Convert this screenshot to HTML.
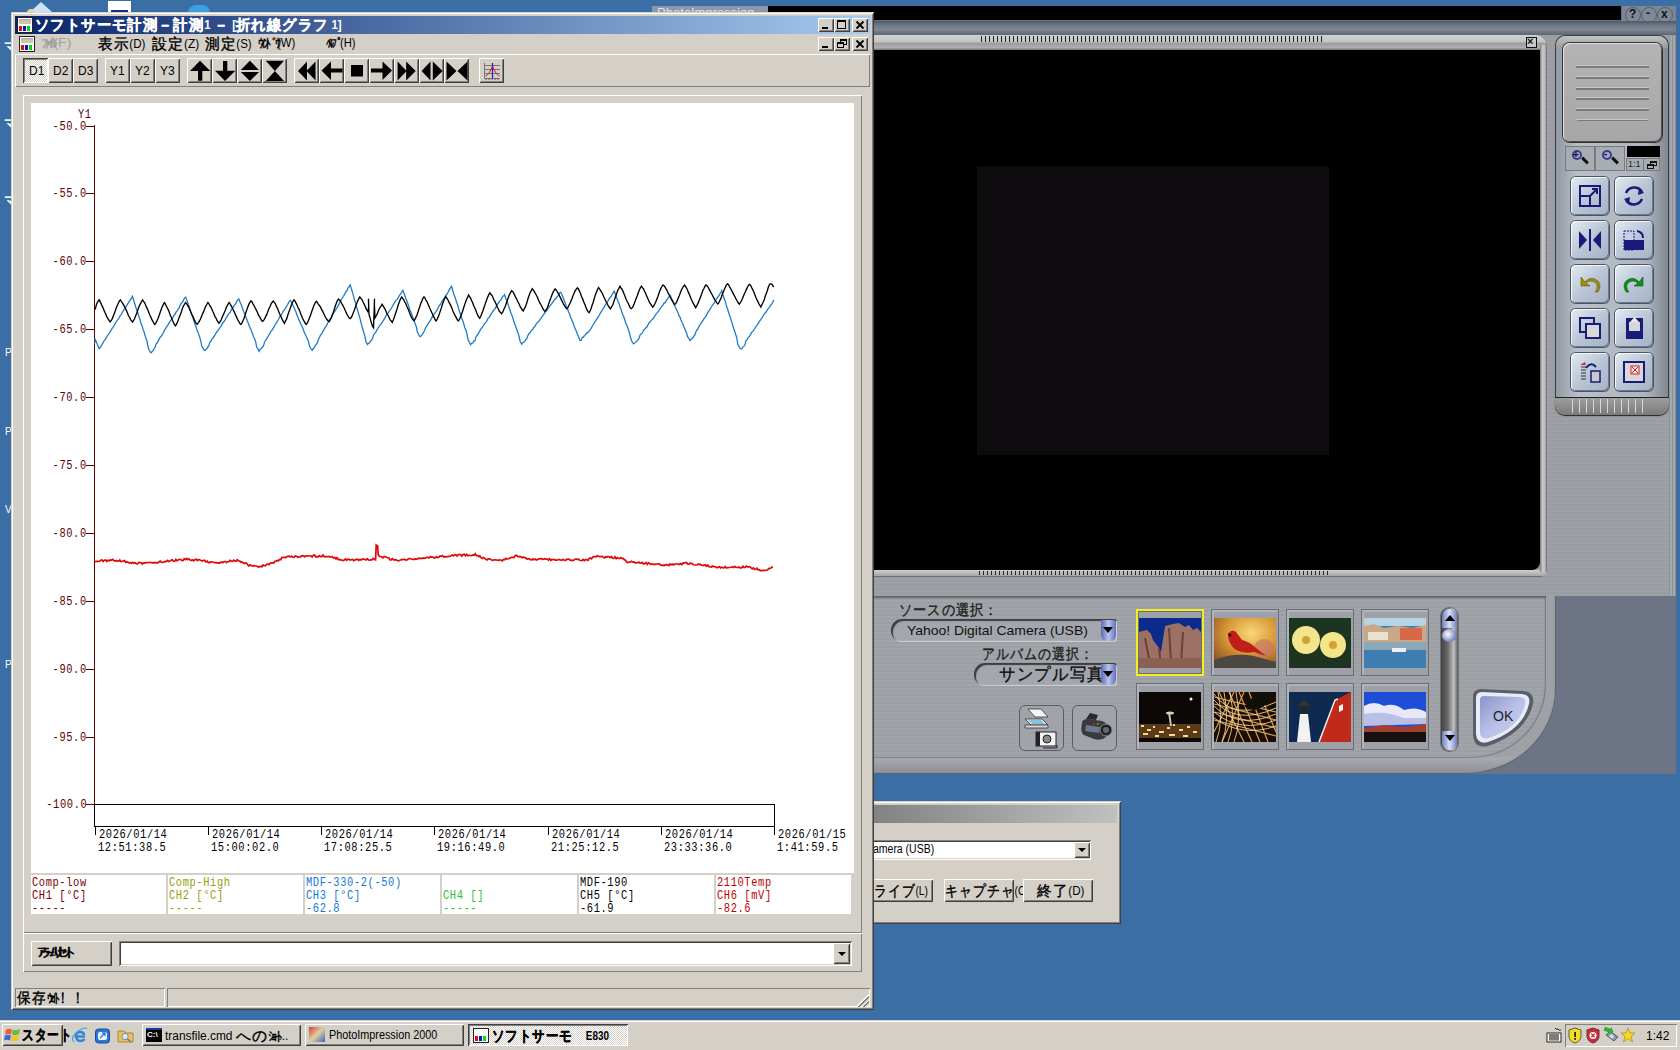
<!DOCTYPE html>
<html><head><meta charset="utf-8"><title>screen</title>
<style>
*{box-sizing:border-box;margin:0;padding:0}
html,body{width:1680px;height:1050px;overflow:hidden}
body{position:relative;background:#3A6EA5;font-family:"Liberation Sans",sans-serif;font-size:12px;color:#000}
.a{position:absolute}
.face{background:#D4D0C8}
.win{background:#D4D0C8;box-shadow:inset 1px 1px #D4D0C8,inset -1px -1px #404040,inset 2px 2px #fff,inset -2px -2px #808080}
.btn{background:#D4D0C8;box-shadow:inset 1px 1px #fff,inset -1px -1px #404040,inset 2px 2px #D4D0C8,inset -2px -2px #808080}
.sunk{box-shadow:inset 1px 1px #808080,inset -1px -1px #fff,inset 2px 2px #404040,inset -2px -2px #D4D0C8}
.thin-up{box-shadow:inset 1px 1px #fff,inset -1px -1px #808080}
.thin-dn{box-shadow:inset 1px 1px #808080,inset -1px -1px #fff}
.mono{font-family:"Liberation Mono",monospace}
.t{white-space:nowrap;line-height:1}
.fw{font-size:1.21em;letter-spacing:0.083em;-webkit-text-stroke:0.4px;vertical-align:-0.08em;line-height:1}
.hw{font-size:1.1em;letter-spacing:-0.33em;-webkit-text-stroke:0.3px;vertical-align:-0.05em;line-height:1}
</style></head><body>
<!-- desktop icon bits -->
<div class="a" style="left:30px;top:2px;width:0;height:0;border-left:11px solid transparent;border-right:11px solid transparent;border-bottom:10px solid #CFE3F7"></div>
<div class="a" style="left:27px;top:9px;width:8px;height:4px;background:#E8D9A0;border-radius:4px 4px 0 0"></div>
<div class="a" style="left:108px;top:1px;width:23px;height:11px;background:#fff"></div>
<div class="a" style="left:111px;top:10px;width:17px;height:2px;background:#1A2A8A"></div>
<div class="a" style="left:188px;top:5px;width:22px;height:8px;background:#3AA0E0;border-radius:11px 11px 0 0"></div>
<div class="a t" style="left:4px;top:40px;color:#fff;font-size:10px"><span class="fw">マ</span></div>
<div class="a t" style="left:4px;top:117px;color:#fff;font-size:10px"><span class="fw">マ</span></div>
<div class="a t" style="left:4px;top:194px;color:#fff;font-size:10px"><span class="fw">マ</span></div>
<div class="a t" style="left:5px;top:348px;color:#fff;font-size:10px">P</div>
<div class="a t" style="left:5px;top:427px;color:#fff;font-size:10px">P</div>
<div class="a t" style="left:5px;top:505px;color:#fff;font-size:10px">V</div>
<div class="a t" style="left:5px;top:660px;color:#fff;font-size:10px">P</div>

<!-- PhotoImpression tab label behind -->
<div class="a" style="left:652px;top:6px;width:116px;height:8px;background:#8C97A8"></div>
<div class="a t" style="left:657px;top:6px;color:#DDE3EC;font-size:13px">PhotoImpression</div>

<!-- PhotoImpression body -->
<div class="a" style="left:768px;top:6px;width:908px;height:590px;background:repeating-linear-gradient(#9DA1A6 0 2px,#999DA2 2px 4px)"></div>
<div class="a" style="left:768px;top:6px;width:854px;height:15px;background:#000;box-shadow:inset -1px -1px #6A7280"></div>
<div class="a" style="left:1622px;top:6px;width:54px;height:15px;background:#7C8592"></div>
<div class="a" style="left:1625px;top:7px;width:16px;height:16px;border-radius:50%;border:1px solid #5A6270;background:#7F8896"></div>
<div class="a" style="left:1641px;top:7px;width:16px;height:16px;border-radius:50%;border:1px solid #5A6270;background:#7F8896"></div>
<div class="a" style="left:1657px;top:7px;width:16px;height:16px;border-radius:50%;border:1px solid #5A6270;background:#7F8896"></div>
<div class="a t" style="left:1629px;top:8px;font-size:12px;font-weight:bold;color:#111">?</div>
<div class="a t" style="left:1646px;top:7px;font-size:12px;font-weight:bold;color:#111">-</div>
<div class="a t" style="left:1661px;top:8px;font-size:12px;font-weight:bold;color:#111">x</div>
<div class="a" style="left:768px;top:21px;width:908px;height:14px;background:linear-gradient(#4F5866,#6E7784 30%,#7D8692 60%,#5E6673)"></div>
<div class="a" style="left:1669px;top:35px;width:7px;height:561px;background:repeating-linear-gradient(90deg,#8E9399 0 1px,#A4A8AD 1px 3px)"></div>

<!-- viewer frame -->
<div class="a" style="left:768px;top:35px;width:779px;height:542px;border-radius:0 12px 12px 0;background:linear-gradient(90deg,#B5B5B5,#C9C9C9 95%,#8A8A8A);box-shadow:inset -1px -1px #505050"></div>
<div class="a" style="left:768px;top:35px;width:779px;height:15px;border-radius:0 12px 0 0;background:linear-gradient(#D2D2D2,#C4C4C4 45%,#9C9C9C 55%,#B0B0B0 85%,#707070)"></div>
<div class="a" style="left:768px;top:570px;width:779px;height:7px;border-radius:0 0 12px 0;background:linear-gradient(#CFCFCF,#A8A8A8 80%,#505050)"></div>
<div class="a" style="left:1540px;top:45px;width:7px;height:527px;background:linear-gradient(90deg,#7A7A7A,#C8C8C8 35%,#BDBDBD 70%,#6A6A6A)"></div>
<div class="a" style="left:768px;top:50px;width:772px;height:520px;background:#000;border-radius:0 0 8px 0"></div>
<div class="a" style="left:981px;top:36px;width:344px;height:6px;background:repeating-linear-gradient(90deg,#222 0 1px,transparent 1px 4px)"></div>
<div class="a" style="left:979px;top:571px;width:350px;height:4px;background:repeating-linear-gradient(90deg,#222 0 1px,transparent 1px 4px)"></div>
<div class="a" style="left:1526px;top:37px;width:11px;height:11px;border:1px solid #111;background:#C8C8C8"></div>
<div class="a t" style="left:1527px;top:36px;font-size:11px;font-weight:bold;color:#111">×</div>
<div class="a" style="left:977px;top:166px;width:352px;height:289px;background:#0E0B0E"></div>

<!-- lower panel -->
<div class="a" style="left:873px;top:596px;width:803px;height:178px;background:#6D7486"></div>
<div class="a" style="left:768px;top:596px;width:788px;height:178px;border-radius:0 0 90px 0 / 0 0 84px 0;background:linear-gradient(#9EA1A6 0,#9EA1A6 160px,#A6A9AE 162px,#8C9097 178px);box-shadow:inset -1px -1px 1px #5A5F68"></div>
<div class="a" style="left:768px;top:596px;width:778px;height:162px;border-radius:0 0 74px 0 / 0 0 74px 0;background:repeating-linear-gradient(#A1A4A9 0 2px,#9C9FA4 2px 4px);box-shadow:inset 0 2px 2px #5E6268,inset -1px -1px 1px #80848A"></div>
<!-- right tool panel -->
<div class="a" style="left:1555px;top:35px;width:114px;height:380px;border-radius:10px 10px 12px 12px;background:linear-gradient(90deg,#8E96A0,#B9C0C9 20%,#AEB5BF 80%,#7E858F);box-shadow:inset 0 0 0 1px #3A3E44"></div>
<div class="a" style="left:1556px;top:36px;width:112px;height:12px;border-radius:10px 10px 0 0;background:linear-gradient(#C4C4C4,#9A9A9A)"></div>
<div class="a" style="left:1563px;top:43px;width:99px;height:99px;border-radius:7px;background:linear-gradient(#B4B4B4,#A6A6A6);box-shadow:inset 1px 1px #E0E0E0,inset -1px -1px #505050,0 0 0 1px #303030"></div>
<div class="a" style="left:1576px;top:64px;width:73px;height:57px;background:repeating-linear-gradient(transparent 0 1px,#C8C8C8 1px 2px,#7A7A7A 2px 4px,transparent 4px 10.8px);border-radius:3px"></div>
<div class="a" style="left:1565px;top:146px;width:30px;height:25px;box-shadow:inset 1px 1px #7A7A7A,inset -1px -1px #7A7A7A;background:#A8ADB4"></div>
<div class="a" style="left:1595px;top:146px;width:30px;height:25px;box-shadow:inset 1px 1px #7A7A7A,inset -1px -1px #7A7A7A;background:#A8ADB4"></div>
<div class="a" style="left:1572px;top:150px;width:10px;height:10px;border-radius:50%;border:2px solid #3A3A9A"></div>
<div class="a" style="left:1581px;top:159px;width:8px;height:3px;background:#111;transform:rotate(45deg)"></div>
<div class="a" style="left:1602px;top:150px;width:10px;height:10px;border-radius:50%;border:2px solid #3A3A9A"></div>
<div class="a" style="left:1611px;top:159px;width:8px;height:3px;background:#111;transform:rotate(45deg)"></div>
<div class="a" style="left:1627px;top:146px;width:33px;height:11px;background:#000"></div>
<div class="a" style="left:1626px;top:158px;width:34px;height:13px;box-shadow:inset 0 0 0 1px #7A7A7A;background:#A8ADB4"></div>
<div class="a" style="left:1643px;top:158px;width:1px;height:13px;background:#7A7A7A"></div>
<div class="a t" style="left:1628px;top:160px;font-size:9px;color:#222">1:1</div>
<div class="a" style="left:1650px;top:161px;width:7px;height:5px;border:1px solid #111;border-top-width:2px"></div>
<div class="a" style="left:1647px;top:164px;width:7px;height:5px;border:1px solid #111;border-top-width:2px;background:#A8ADB4"></div>
<div class="a t" style="left:1573px;top:150px;font-size:10px;font-weight:bold;color:#111">+</div>
<div class="a t" style="left:1604px;top:149px;font-size:10px;font-weight:bold;color:#111">-</div>
<div class="a" style="left:1571px;top:177px;width:38px;height:38px;border-radius:5px;background:linear-gradient(135deg,#E4EAF2,#BAC6D6 50%,#A4B2C4);box-shadow:inset 1px 1px #F4F8FC,inset -1px -1px #6A7A90,0 0 0 1px #4A5464"></div>
<div class="a" style="left:1615px;top:177px;width:38px;height:38px;border-radius:5px;background:linear-gradient(135deg,#E4EAF2,#BAC6D6 50%,#A4B2C4);box-shadow:inset 1px 1px #F4F8FC,inset -1px -1px #6A7A90,0 0 0 1px #4A5464"></div>
<div class="a" style="left:1571px;top:221px;width:38px;height:38px;border-radius:5px;background:linear-gradient(135deg,#E4EAF2,#BAC6D6 50%,#A4B2C4);box-shadow:inset 1px 1px #F4F8FC,inset -1px -1px #6A7A90,0 0 0 1px #4A5464"></div>
<div class="a" style="left:1615px;top:221px;width:38px;height:38px;border-radius:5px;background:linear-gradient(135deg,#E4EAF2,#BAC6D6 50%,#A4B2C4);box-shadow:inset 1px 1px #F4F8FC,inset -1px -1px #6A7A90,0 0 0 1px #4A5464"></div>
<div class="a" style="left:1571px;top:265px;width:38px;height:38px;border-radius:5px;background:linear-gradient(135deg,#E4EAF2,#BAC6D6 50%,#A4B2C4);box-shadow:inset 1px 1px #F4F8FC,inset -1px -1px #6A7A90,0 0 0 1px #4A5464"></div>
<div class="a" style="left:1615px;top:265px;width:38px;height:38px;border-radius:5px;background:linear-gradient(135deg,#E4EAF2,#BAC6D6 50%,#A4B2C4);box-shadow:inset 1px 1px #F4F8FC,inset -1px -1px #6A7A90,0 0 0 1px #4A5464"></div>
<div class="a" style="left:1571px;top:309px;width:38px;height:38px;border-radius:5px;background:linear-gradient(135deg,#E4EAF2,#BAC6D6 50%,#A4B2C4);box-shadow:inset 1px 1px #F4F8FC,inset -1px -1px #6A7A90,0 0 0 1px #4A5464"></div>
<div class="a" style="left:1615px;top:309px;width:38px;height:38px;border-radius:5px;background:linear-gradient(135deg,#E4EAF2,#BAC6D6 50%,#A4B2C4);box-shadow:inset 1px 1px #F4F8FC,inset -1px -1px #6A7A90,0 0 0 1px #4A5464"></div>
<div class="a" style="left:1571px;top:353px;width:38px;height:38px;border-radius:5px;background:linear-gradient(135deg,#E4EAF2,#BAC6D6 50%,#A4B2C4);box-shadow:inset 1px 1px #F4F8FC,inset -1px -1px #6A7A90,0 0 0 1px #4A5464"></div>
<div class="a" style="left:1615px;top:353px;width:38px;height:38px;border-radius:5px;background:linear-gradient(135deg,#E4EAF2,#BAC6D6 50%,#A4B2C4);box-shadow:inset 1px 1px #F4F8FC,inset -1px -1px #6A7A90,0 0 0 1px #4A5464"></div>
<svg class="a" style="left:1571px;top:177px" width="38" height="38" viewBox="0 0 38 38"><rect x="9" y="9" width="20" height="20" fill="none" stroke="#1A1A7A" stroke-width="2"/><rect x="9" y="19" width="10" height="10" fill="none" stroke="#1A1A7A" stroke-width="2"/><path d="M18 20 L26 12 M21 12 H26 V17" stroke="#1A1A7A" stroke-width="2" fill="none"/></svg>
<svg class="a" style="left:1615px;top:177px" width="38" height="38" viewBox="0 0 38 38"><path d="M11 16 A9 9 0 0 1 27 15 M27 22 A9 9 0 0 1 11 23" stroke="#1A1A7A" stroke-width="2.5" fill="none"/><path d="M24 11 L29 16 L23 18 Z M14 27 L9 22 L15 20 Z" fill="#1A1A7A"/></svg>
<svg class="a" style="left:1571px;top:221px" width="38" height="38" viewBox="0 0 38 38"><path d="M8 10 L16 19 L8 28 Z M30 10 L22 19 L30 28 Z" fill="#1A1A7A"/><rect x="18" y="8" width="2" height="22" fill="#1A1A7A"/></svg>
<svg class="a" style="left:1615px;top:221px" width="38" height="38" viewBox="0 0 38 38"><rect x="9" y="10" width="10" height="19" fill="#C8CCE8" stroke="#1A1A7A" stroke-dasharray="2 1"/><rect x="9" y="19" width="20" height="10" fill="#1A1A7A"/><path d="M22 10 Q28 11 28 17" stroke="#1A1A7A" stroke-width="2" fill="none"/></svg>
<svg class="a" style="left:1571px;top:265px" width="38" height="38" viewBox="0 0 38 38"><path d="M14 17 L10 12 L10 21 L19 21 L15 18 Q20 14 25 18 Q28 22 24 27 L27 27 Q31 20 27 16 Q20 10 14 17 Z" fill="#9C8C14" stroke="#6A5A08" stroke-width="0.6"/></svg>
<svg class="a" style="left:1615px;top:265px" width="38" height="38" viewBox="0 0 38 38"><path d="M24 17 L28 12 L28 21 L19 21 L23 18 Q18 14 13 18 Q10 22 14 27 L11 27 Q7 20 11 16 Q18 10 24 17 Z" fill="#10901A" stroke="#086010" stroke-width="0.6"/></svg>
<svg class="a" style="left:1571px;top:309px" width="38" height="38" viewBox="0 0 38 38"><rect x="9" y="9" width="14" height="14" fill="none" stroke="#1A1A7A" stroke-width="2"/><rect x="15" y="15" width="14" height="14" fill="#D8D8D8" stroke="#1A1A7A" stroke-width="2"/></svg>
<svg class="a" style="left:1615px;top:309px" width="38" height="38" viewBox="0 0 38 38"><rect x="11" y="9" width="17" height="21" fill="#1A1A7A"/><rect x="14" y="13" width="11" height="9" fill="#D8D8D8"/><path d="M15 13 L19.5 8 L24 13 Z" fill="#E8E8E8"/></svg>
<svg class="a" style="left:1571px;top:353px" width="38" height="38" viewBox="0 0 38 38"><path d="M10 14 H15 M10 17 H15 M10 20 H15 M10 23 H15 M10 26 H15" stroke="#333"/><path d="M9 12 L14 9 L15 12" fill="#D03030"/><path d="M15 15 Q20 8 25 14" stroke="#1A1A7A" stroke-width="2" fill="none"/><rect x="20" y="18" width="9" height="11" fill="#C8C8C8" stroke="#1A1A7A" stroke-width="1.5"/></svg>
<svg class="a" style="left:1615px;top:353px" width="38" height="38" viewBox="0 0 38 38"><rect x="9" y="9" width="20" height="20" fill="#D8D8D8" stroke="#1A1A7A" stroke-width="2"/><rect x="16" y="13" width="8" height="8" fill="#F8E8E8" stroke="#D02020"/><path d="M17 14 L23 20 M23 14 L17 20" stroke="#D02020"/></svg>
<div class="a" style="left:1555px;top:397px;width:114px;height:18px;border-radius:0 0 10px 10px;background:linear-gradient(#A0A0A0,#7A7A7A);box-shadow:inset 0 1px #222,0 1px 1px #222"></div>
<div class="a" style="left:1572px;top:399px;width:72px;height:14px;background:repeating-linear-gradient(90deg,#D8D8D8 0 1px,transparent 1px 7px)"></div>

<!-- left controls -->
<div class="a t" style="transform:scaleX(0.878);transform-origin:0 0;left:899px;top:603px;font-size:12px;color:#222"><span class="fw">ソースの選択：</span></div>
<div class="a" style="left:891px;top:619px;width:226px;height:23px;border-radius:11px 3px 3px 11px;background:#A3A7AD;box-shadow:inset 2px 2px 1px #3A3E44,inset -1px -1px 1px #D0D4D8"></div>
<div class="a t" style="transform:scaleX(1.071);transform-origin:0 0;left:907px;top:624px;font-size:13px;color:#111">Yahoo! Digital Camera (USB)</div>
<div class="a" style="left:1101px;top:620px;width:15px;height:21px;border-radius:0 3px 6px 6px;background:linear-gradient(90deg,#5A6AB0,#B8C4F0 50%,#6070B8)"></div>
<div class="a" style="left:1103px;top:627px;width:0;height:0;border-left:5px solid transparent;border-right:5px solid transparent;border-top:6px solid #000"></div>
<div class="a t" style="transform:scaleX(0.860);transform-origin:0 0;left:982px;top:647px;font-size:12px;color:#222"><span class="fw">アルバムの選択：</span></div>
<div class="a" style="left:974px;top:663px;width:143px;height:23px;border-radius:11px 3px 3px 11px;background:#A3A7AD;box-shadow:inset 2px 2px 1px #3A3E44,inset -1px -1px 1px #D0D4D8"></div>
<div class="a t" style="transform:scaleX(0.960);transform-origin:0 0;left:999px;top:667px;font-size:14px;color:#111"><span class="fw">サンプル写真</span></div>
<div class="a" style="left:1101px;top:664px;width:15px;height:21px;border-radius:0 3px 6px 6px;background:linear-gradient(90deg,#5A6AB0,#B8C4F0 50%,#6070B8)"></div>
<div class="a" style="left:1103px;top:671px;width:0;height:0;border-left:5px solid transparent;border-right:5px solid transparent;border-top:6px solid #000"></div>
<div class="a" style="left:1019px;top:705px;width:45px;height:46px;border-radius:6px;border:1px solid #5A5E64;background:#A0A4AA"></div>
<svg class="a" style="left:1019px;top:705px" width="45" height="46" viewBox="0 0 45 46"><path d="M6 14 L23 14 L29 20 L12 20 Z" fill="#E8E8E8" stroke="#333" stroke-width="0.8"/><path d="M9 15 L22 15 L26 19 L13 19 Z" fill="#8AC0E0"/><path d="M6 20 L29 20 L29 23 L6 23 Z" fill="#D8D8D8" stroke="#333" stroke-width="0.8"/><path d="M9 4 L22 4 L29 12 L16 12 Z" fill="#F4F4F4" stroke="#333" stroke-width="0.8"/><rect x="17" y="27" width="20" height="14" fill="#F4F4F4" stroke="#222"/><rect x="17" y="27" width="4" height="14" fill="#222"/><circle cx="28" cy="34" r="4" fill="#888" stroke="#222"/><path d="M24 43 H38 V40" stroke="#222" fill="none"/></svg>
<div class="a" style="left:1072px;top:705px;width:45px;height:46px;border-radius:6px;border:1px solid #5A5E64;background:#A0A4AA"></div>
<svg class="a" style="left:1072px;top:705px" width="45" height="46" viewBox="0 0 45 46"><path d="M10 18 Q10 14 16 14 L30 16 Q36 18 36 24 L34 32 Q30 36 22 34 L12 30 Q8 28 10 18 Z" fill="#3A3A3A"/><path d="M14 20 L28 22 L27 28 L13 26 Z" fill="#6A7A90"/><circle cx="34" cy="25" r="6" fill="#222" stroke="#888"/><circle cx="34" cy="25" r="3" fill="#5A6A80"/><path d="M14 14 L18 8 L26 10 L24 15 Z" fill="#2A2A2A"/><circle cx="22" cy="19" r="1" fill="#E02020"/><circle cx="26" cy="19" r="1" fill="#20C020"/></svg>
<!-- thumbnails -->
<div class="a" style="left:1136px;top:609px;width:68px;height:67px;background:#9EA2A8;box-shadow:inset 0 0 0 2px #F4F020,inset 0 0 0 3px #6A6E74"></div>
<svg class="a" style="left:1139px;top:618px" width="62" height="50" viewBox="0 0 62 50"><rect width="62" height="50" fill="#0A2A8C"/><path d="M0 14 L8 12 L12 16 L14 22 L17 26 L20 30 L22 34 L26 8 L34 6 L40 5 L46 9 L50 7 L54 12 L58 10 L62 14 L62 50 L0 50 Z" fill="#9C7064"/><path d="M6 20 L10 40 M30 10 L32 44 M44 14 L42 46 M20 30 L22 48" stroke="#6A4038" stroke-width="2"/><rect y="40" width="62" height="10" fill="#8A6050"/></svg>
<div class="a" style="left:1211px;top:609px;width:68px;height:67px;background:#9EA2A8;box-shadow:inset 0 0 0 1px #6A6E74,inset 1px 1px 0 2px #B0B4BA"></div>
<svg class="a" style="left:1214px;top:618px" width="62" height="50" viewBox="0 0 62 50"><defs><radialGradient id="cg" cx="0.6" cy="0.3" r="0.8"><stop offset="0" stop-color="#F8D878"/><stop offset="0.5" stop-color="#D89838"/><stop offset="1" stop-color="#8A5020"/></radialGradient></defs><rect width="62" height="50" fill="url(#cg)"/><ellipse cx="50" cy="30" rx="10" ry="9" fill="#C87868" opacity="0.7"/><path d="M0 42 Q20 34 40 38 L62 44 L62 50 L0 50 Z" fill="#4A4840"/><path d="M14 16 Q18 10 22 14 L28 22 Q36 24 42 30 L52 38 L40 34 Q30 36 22 32 Q14 26 14 16 Z" fill="#C01E18"/><path d="M14 15 L18 17 L15 19 Z" fill="#111"/></svg>
<div class="a" style="left:1286px;top:609px;width:68px;height:67px;background:#9EA2A8;box-shadow:inset 0 0 0 1px #6A6E74,inset 1px 1px 0 2px #B0B4BA"></div>
<svg class="a" style="left:1289px;top:618px" width="62" height="50" viewBox="0 0 62 50"><rect width="62" height="50" fill="#1C3420"/><circle cx="17" cy="22" r="14" fill="#F2E58A"/><circle cx="44" cy="27" r="13" fill="#F2E58A"/><circle cx="17" cy="22" r="4" fill="#D8A030"/><circle cx="44" cy="27" r="4" fill="#D8A030"/></svg>
<div class="a" style="left:1361px;top:609px;width:68px;height:67px;background:#9EA2A8;box-shadow:inset 0 0 0 1px #6A6E74,inset 1px 1px 0 2px #B0B4BA"></div>
<svg class="a" style="left:1364px;top:618px" width="62" height="50" viewBox="0 0 62 50"><rect width="62" height="50" fill="#3E7EB2"/><rect width="62" height="8" fill="#B8D4E4"/><path d="M0 8 L10 6 L20 10 L34 8 L48 10 L62 7 L62 24 L0 24 Z" fill="#C8A888"/><rect x="36" y="10" width="22" height="12" fill="#D86848"/><rect x="4" y="14" width="20" height="8" fill="#E8E0D0"/><rect y="24" width="62" height="8" fill="#8AA8B8"/><rect x="28" y="30" width="14" height="4" fill="#F0F0F0"/></svg>
<div class="a" style="left:1136px;top:683px;width:68px;height:67px;background:#9EA2A8;box-shadow:inset 0 0 0 1px #6A6E74,inset 1px 1px 0 2px #B0B4BA"></div>
<svg class="a" style="left:1139px;top:692px" width="62" height="50" viewBox="0 0 62 50"><rect width="62" height="50" fill="#0C0806"/><circle cx="52" cy="7" r="1.5" fill="#fff"/><rect x="0" y="32" width="62" height="14" fill="#5A3A18"/><path d="M2 34 h3 M8 38 h4 M14 35 h2 M20 40 h5 M28 36 h3 M34 33 h2 M40 38 h4 M48 35 h3 M54 40 h4 M4 42 h5 M16 44 h4 M30 43 h6 M44 44 h5" stroke="#F8D890" stroke-width="2"/><path d="M30 20 L32 34" stroke="#C8C0A8" stroke-width="2"/><ellipse cx="31" cy="21" rx="4" ry="1.5" fill="#D8D0B8"/></svg>
<div class="a" style="left:1211px;top:683px;width:68px;height:67px;background:#9EA2A8;box-shadow:inset 0 0 0 1px #6A6E74,inset 1px 1px 0 2px #B0B4BA"></div>
<svg class="a" style="left:1214px;top:692px" width="62" height="50" viewBox="0 0 62 50"><rect width="62" height="50" fill="#1A0E04"/><path d="M0 5 L62 20 M0 12 L62 28 M0 20 L62 36 M0 28 L62 44 M5 0 L30 50 M15 0 L38 50 M25 0 L46 50 M35 0 L54 50 M45 0 L62 40 M0 40 L20 0 M8 50 L30 0" stroke="#F0B060" stroke-width="1.2" opacity="0.9"/><path d="M0 2 Q20 30 62 10 M0 8 Q22 34 62 16 M0 14 Q24 38 62 22 M0 20 Q26 42 62 28 M0 26 Q28 46 62 34 M4 0 Q10 30 2 50 M10 0 Q16 30 8 50 M16 0 Q22 30 14 50 M22 0 Q28 30 20 50" stroke="#F8D8A0" stroke-width="1" fill="none" opacity="0.85"/><path d="M30 14 L44 0 L62 0 L50 14 Q40 22 30 14 Z" fill="#101008"/></svg>
<div class="a" style="left:1286px;top:683px;width:68px;height:67px;background:#9EA2A8;box-shadow:inset 0 0 0 1px #6A6E74,inset 1px 1px 0 2px #B0B4BA"></div>
<svg class="a" style="left:1289px;top:692px" width="62" height="50" viewBox="0 0 62 50"><rect width="62" height="50" fill="#0E2A50"/><path d="M30 50 L46 8 L62 0 L62 50 Z" fill="#C02A1A"/><path d="M30 50 L46 8 L49 7" stroke="#F0F0F0" stroke-width="1.5" fill="none"/><path d="M8 50 L11 22 L19 22 L22 50 Z" fill="#F2F2F2"/><rect x="9" y="14" width="12" height="8" fill="#1A2A3A"/><path d="M8 14 L15 8 L22 14 Z" fill="#333"/><path d="M50 14 L54 12 L54 18 L50 20 Z" fill="#fff"/></svg>
<div class="a" style="left:1361px;top:683px;width:68px;height:67px;background:#9EA2A8;box-shadow:inset 0 0 0 1px #6A6E74,inset 1px 1px 0 2px #B0B4BA"></div>
<svg class="a" style="left:1364px;top:692px" width="62" height="50" viewBox="0 0 62 50"><rect width="62" height="50" fill="#1E4ED8"/><path d="M0 14 Q10 8 20 14 Q30 10 40 18 Q52 14 62 20 L62 30 L0 32 Z" fill="#E8E8F8"/><path d="M0 22 Q20 18 40 26 L62 26 L62 32 L0 34 Z" fill="#B8C0E8"/><path d="M0 36 L20 33 L40 35 L62 32 L62 40 L0 40 Z" fill="#A04030"/><rect y="40" width="62" height="10" fill="#1A1010"/></svg>
<!-- scrollbar -->
<div class="a" style="left:1441px;top:608px;width:17px;height:143px;border-radius:8px;background:linear-gradient(90deg,#404040,#6A6A6A 40%,#C0C0C0 75%,#606060);box-shadow:0 0 0 1px #707070"></div>
<div class="a" style="left:1442px;top:609px;width:15px;height:19px;border-radius:7px 7px 1px 1px;background:linear-gradient(90deg,#7080C0,#D8E0F8 50%,#7080C0)"></div>
<div class="a" style="left:1445px;top:615px;width:0;height:0;border-left:5px solid transparent;border-right:5px solid transparent;border-bottom:6px solid #000"></div>
<div class="a" style="left:1442px;top:629px;width:15px;height:13px;border-radius:50%;background:radial-gradient(circle at 40% 40%,#fff,#8090C8 60%,#5060A0)"></div>
<div class="a" style="left:1442px;top:731px;width:15px;height:19px;border-radius:1px 1px 7px 7px;background:linear-gradient(90deg,#7080C0,#D8E0F8 50%,#7080C0)"></div>
<div class="a" style="left:1445px;top:735px;width:0;height:0;border-left:5px solid transparent;border-right:5px solid transparent;border-top:6px solid #000"></div>
<!-- OK button -->
<svg class="a" style="left:1471px;top:687px" width="66" height="62" viewBox="0 0 66 62"><defs><linearGradient id="okg" x1="0" y1="0" x2="1" y2="1"><stop offset="0" stop-color="#8A94C8"/><stop offset="0.5" stop-color="#B8C0E8"/><stop offset="1" stop-color="#C8D0F0"/></linearGradient></defs>
<path d="M10 2 L52 4 Q64 5 62 17 Q55 46 17 59 Q3 62 2 48 L2 10 Q2 2 10 2 Z" fill="#5A5E68"/>
<path d="M11 5 L51 7 Q60 8 58 17 Q52 43 17 55 Q6 58 5 47 L5 11 Q5 5 11 5 Z" fill="#E8ECF8"/>
<path d="M13 9 L49 10 Q56 11 54 18 Q48 41 18 51 Q9 53 9 45 L9 13 Q9 9 13 9 Z" fill="url(#okg)"/>
<text x="22" y="34" font-family="Liberation Sans" font-size="14" fill="#222">OK</text></svg>
<!-- lower capture dialog -->
<div class="a win" style="left:860px;top:801px;width:261px;height:123px"></div>
<div class="a" style="left:864px;top:805px;width:253px;height:18px;background:linear-gradient(90deg,#808080,#C0C0C0)"></div>
<div class="a sunk" style="left:860px;top:840px;width:231px;height:20px;background:#fff"></div>
<div class="a t" style="transform:scaleX(0.873);transform-origin:0 0;left:873px;top:843px;font-size:12px">amera (USB)</div>
<div class="a btn" style="left:1074px;top:842px;width:16px;height:16px"></div>
<div class="a" style="left:1078px;top:848px;width:0;height:0;border-left:4px solid transparent;border-right:4px solid transparent;border-top:4px solid #000"></div>
<div class="a btn" style="left:860px;top:879px;width:73px;height:23px"></div>
<div class="a t" style="transform:scaleX(0.852);transform-origin:0 0;left:874px;top:884px;font-size:12px"><span class="fw">ライブ</span>(L)</div>
<div class="a btn" style="left:944px;top:879px;width:70px;height:23px"></div>
<div class="a t" style="transform:scaleX(0.859);transform-origin:0 0;left:945px;top:884px;font-size:12px"><span class="fw">キャプチャ</span>(C)</div>
<div class="a btn" style="left:1023px;top:879px;width:70px;height:23px"></div>
<div class="a t" style="transform:scaleX(0.966);transform-origin:0 0;left:1037px;top:884px;font-size:12px"><span class="fw">終了</span>(D)</div>

<!-- TASKBAR -->
<div class="a" style="left:0;top:1020px;width:1680px;height:30px;background:#D4D0C8;box-shadow:inset 0 1px #D4D0C8,inset 0 2px #fff"></div>
<div class="a btn" style="left:2px;top:1024px;width:61px;height:22px"></div>
<svg class="a" style="left:4px;top:1026px" width="18" height="18" viewBox="0 0 18 18"><path d="M2 4 Q5 2 8 3.5 L7 8.5 Q4 7 1 8.5 Z" fill="#E8602A"/><path d="M9 3.5 Q12 5 16 3 L15 8 Q12 10 8 8.5 Z" fill="#6BB83A"/><path d="M1 9.5 Q4 8 7 9.5 L6 14.5 Q3 13 0 14.5 Z" fill="#3A6CD0"/><path d="M8 9.5 Q11 11 15 9 L14 14 Q11 16 7 14.5 Z" fill="#F4C21A"/></svg>
<div class="a t" style="transform:scaleX(0.778);transform-origin:0 0;left:22px;top:1028px;font-size:12px;font-weight:bold"><span class="fw">スタート</span></div>
<svg class="a" style="left:71px;top:1027px" width="18" height="18" viewBox="0 0 18 18"><path d="M14 9.5 H5 Q5 5 9 5 Q13 5 13 8" stroke="#2F8AD8" stroke-width="2.6" fill="none"/><path d="M5.5 9.5 Q5.5 14 9.5 14 Q12 14 13.5 12" stroke="#2F8AD8" stroke-width="2.6" fill="none"/><path d="M3 15 Q-1 11 6 5 Q14 -1 16 2" stroke="#4AA0E8" stroke-width="1.2" fill="none"/></svg>
<svg class="a" style="left:94px;top:1027px" width="18" height="18" viewBox="0 0 18 18"><rect x="1.5" y="2" width="14" height="14" rx="3" fill="#2F76CF" stroke="#1B4E9A"/><rect x="4" y="5" width="9" height="8" rx="2" fill="#E8F2FC"/><path d="M6 11 L11 6 M8 6 H11 V9" stroke="#2F76CF" stroke-width="1.3" fill="none"/></svg>
<svg class="a" style="left:117px;top:1028px" width="18" height="16" viewBox="0 0 18 16"><path d="M1 3 H7 L8.5 5 H16 V14 H1 Z" fill="#E8C060" stroke="#A07A20" stroke-width="0.8"/><circle cx="8" cy="8.5" r="3.2" fill="#CFE8F8" stroke="#888" stroke-width="1"/><path d="M10.5 11 L14 14" stroke="#777" stroke-width="1.5"/></svg>
<div class="a btn" style="left:142px;top:1024px;width:159px;height:22px"></div>
<div class="a" style="left:146px;top:1028px;width:16px;height:14px;background:#000;border-top:2px solid #1A3A9A"></div>
<div class="a t" style="left:147px;top:1031px;font-size:8px;color:#fff;font-weight:bold">C:\</div>
<div class="a t" style="transform:scaleX(0.992);transform-origin:0 0;left:165px;top:1029px;font-size:12px">transfile.cmd <span class="fw">への</span><span class="hw">ｼｮｰﾄ</span>...</div>
<div class="a btn" style="left:305px;top:1024px;width:159px;height:22px"></div>
<div class="a" style="left:309px;top:1027px;width:16px;height:15px;background:linear-gradient(135deg,#D04040,#E0D0A0 50%,#4060C0)"></div>
<div class="a t" style="transform:scaleX(0.902);transform-origin:0 0;left:329px;top:1029px;font-size:12px">PhotoImpression 2000</div>
<div class="a" style="left:468px;top:1024px;width:160px;height:22px;box-shadow:inset 1px 1px #404040,inset -1px -1px #fff,inset 2px 2px #808080;background:repeating-conic-gradient(#fff 0 25%,#D4D0C8 0 50%) 0 0/2px 2px"></div>
<div class="a" style="left:473px;top:1028px;width:16px;height:15px;background:#fff;border:1px solid #222"></div>
<div class="a" style="left:475px;top:1036px;width:3px;height:5px;background:#E01010"></div>
<div class="a" style="left:479px;top:1036px;width:3px;height:5px;background:#1010D0"></div>
<div class="a" style="left:483px;top:1036px;width:3px;height:5px;background:#10D010"></div>
<div class="a t" style="transform:scaleX(0.827);transform-origin:0 0;left:492px;top:1029px;font-size:12px;font-weight:bold"><span class="fw">ソフトサーモ　</span>E830</div>
<!-- tray -->
<svg class="a" style="left:1546px;top:1027px" width="16" height="16" viewBox="0 0 16 16"><path d="M9 1 Q10 3 12 2 Q13 4 15 3" stroke="#222" fill="none"/><rect x="1" y="6" width="14" height="9" fill="#fff" stroke="#222"/><path d="M3 8 H13 M3 10 H13 M3 12 H13 M4 7 V14 M6 7 V14 M8 7 V14 M10 7 V14 M12 7 V14" stroke="#333" stroke-width="0.8"/></svg>
<div class="a thin-dn" style="left:1565px;top:1024px;width:112px;height:23px"></div>
<svg class="a" style="left:1567px;top:1027px" width="16" height="17" viewBox="0 0 16 17"><path d="M8 1 L14 3 L14 9 Q14 14 8 16 Q2 14 2 9 L2 3 Z" fill="#F2E020" stroke="#5A5A3A"/><rect x="7.2" y="5" width="1.8" height="5" fill="#222"/><rect x="7.2" y="11" width="1.8" height="1.8" fill="#222"/></svg>
<svg class="a" style="left:1585px;top:1027px" width="16" height="17" viewBox="0 0 16 17"><path d="M8 1 L14 3 L14 9 Q14 14 8 16 Q2 14 2 9 L2 3 Z" fill="#D0283A" stroke="#5A3A3A"/><circle cx="8" cy="8.5" r="3.5" fill="#fff"/><path d="M6.3 6.8 L9.7 10.2 M9.7 6.8 L6.3 10.2" stroke="#D0283A" stroke-width="1.3"/></svg>
<svg class="a" style="left:1602px;top:1026px" width="17" height="18" viewBox="0 0 17 18"><path d="M4 9 L12 15 L16 11 L8 5 Z" fill="#8A9AAA" stroke="#333" stroke-width="0.7"/><rect x="8" y="9" width="4" height="3" fill="#D8E0E8" transform="rotate(35 10 10)"/><path d="M2 2 L8 2 L8 0 L12 4 L8 8 L8 6 L2 6 Z" fill="#30B030" transform="rotate(20 6 4)"/></svg>
<svg class="a" style="left:1620px;top:1027px" width="16" height="16" viewBox="0 0 16 16"><path d="M8 1 L10 6 L15 6 L11 9.5 L12.5 15 L8 11.5 L3.5 15 L5 9.5 L1 6 L6 6 Z" fill="#F8D820" stroke="#B89010" stroke-width="0.8"/></svg>
<div class="a t" style="left:1646px;top:1030px;font-size:12px">1:42</div>
<!-- MAIN WINDOW -->
<div class="a win" style="left:11px;top:12px;width:863px;height:998px"></div>
<div class="a" style="left:15px;top:16px;width:855px;height:18px;background:linear-gradient(90deg,#0A246A,#A6CAF0)"></div>
<div class="a" style="left:17px;top:17px;width:16px;height:16px;background:#fff;border:1px solid #222"></div>
<div class="a" style="left:19px;top:26px;width:3px;height:5px;background:#E01010"></div>
<div class="a" style="left:23px;top:26px;width:3px;height:5px;background:#1010D0"></div>
<div class="a" style="left:27px;top:26px;width:3px;height:5px;background:#10D010"></div>
<div class="a" style="left:19px;top:19px;width:12px;height:5px;background:linear-gradient(#B0A0E0,#E0C0A0,#A0E090)"></div>
<div class="a t" style="transform:scaleX(0.949);transform-origin:0 0;left:35px;top:18px;color:#fff;font-weight:bold;font-size:12px;letter-spacing:0px"><span class="fw">ソフトサーモ計測－計測</span>1 <span class="fw">－</span> [<span class="fw">折れ線グラフ</span> 1]</div>
<div class="a btn" style="left:818px;top:18px;width:16px;height:14px"></div>
<div class="a btn" style="left:834px;top:18px;width:16px;height:14px"></div>
<div class="a btn" style="left:852px;top:18px;width:16px;height:14px"></div>
<div class="a" style="left:822px;top:27px;width:6px;height:2px;background:#000"></div>
<div class="a" style="left:837px;top:20px;width:9px;height:9px;border:1px solid #000;border-top-width:2px"></div>
<svg class="a" style="left:852px;top:18px" width="16" height="14"><path d="M4.5 3.5 L11.5 10.5 M11.5 3.5 L4.5 10.5" stroke="#000" stroke-width="1.8"/></svg>
<!-- menu bar -->
<div class="a" style="left:19px;top:36px;width:16px;height:16px;background:#fff;border:1px solid #222"></div>
<div class="a" style="left:21px;top:45px;width:3px;height:5px;background:#E01010"></div>
<div class="a" style="left:25px;top:45px;width:3px;height:5px;background:#1010D0"></div>
<div class="a" style="left:29px;top:45px;width:3px;height:5px;background:#10D010"></div>
<div class="a" style="left:21px;top:38px;width:12px;height:5px;background:linear-gradient(#B0A0E0,#E0C0A0,#A0E090)"></div>
<div class="a t" style="transform:scaleX(1.171);transform-origin:0 0;left:41px;top:37px;color:#A0A0A0;font-size:12px"><span class="hw">ﾌｧｲﾙ</span>(F)</div>
<div class="a t" style="transform:scaleX(0.966);transform-origin:0 0;left:98px;top:37px;font-size:12px"><span class="fw">表示</span>(D)</div>
<div class="a t" style="transform:scaleX(0.989);transform-origin:0 0;left:152px;top:37px;font-size:12px"><span class="fw">設定</span>(Z)</div>
<div class="a t" style="transform:scaleX(0.965);transform-origin:0 0;left:205px;top:37px;font-size:12px"><span class="fw">測定</span>(S)</div>
<div class="a t" style="transform:scaleX(0.943);transform-origin:0 0;left:258px;top:37px;font-size:12px"><span class="hw">ｳｨﾝﾄﾞｳ</span>(W)</div>
<div class="a t" style="transform:scaleX(0.933);transform-origin:0 0;left:326px;top:37px;font-size:12px"><span class="hw">ﾍﾙﾌﾟ</span>(H)</div>
<div class="a btn" style="left:818px;top:37px;width:16px;height:14px"></div>
<div class="a btn" style="left:834px;top:37px;width:16px;height:14px"></div>
<div class="a btn" style="left:852px;top:37px;width:16px;height:14px"></div>
<div class="a" style="left:822px;top:46px;width:6px;height:2px;background:#000"></div>
<div class="a" style="left:840px;top:39px;width:7px;height:6px;border:1px solid #000;border-top-width:2px"></div>
<div class="a" style="left:837px;top:42px;width:7px;height:6px;border:1px solid #000;border-top-width:2px;background:#D4D0C8"></div>
<svg class="a" style="left:852px;top:37px" width="16" height="14"><path d="M4.5 3.5 L11.5 10.5 M11.5 3.5 L4.5 10.5" stroke="#000" stroke-width="1.8"/></svg>
<!-- toolbar -->
<div class="a thin-up" style="left:15px;top:54px;width:855px;height:33px"></div>
<div class="a" style="left:23px;top:58px;width:25px;height:25px;box-shadow:inset 1px 1px #404040,inset -1px -1px #fff,inset 2px 2px #808080;background:repeating-conic-gradient(#fff 0 25%,#D4D0C8 0 50%) 0 0/2px 2px"></div>
<div class="a t" style="left:29px;top:65px;font-size:12px">D1</div>
<div class="a btn" style="left:48px;top:58px;width:25px;height:25px"></div>
<div class="a t" style="left:53px;top:65px;font-size:12px">D2</div>
<div class="a btn" style="left:73px;top:58px;width:25px;height:25px"></div>
<div class="a t" style="left:78px;top:65px;font-size:12px">D3</div>
<div class="a btn" style="left:105px;top:58px;width:25px;height:25px"></div>
<div class="a t" style="left:110px;top:65px;font-size:12px">Y1</div>
<div class="a btn" style="left:130px;top:58px;width:25px;height:25px"></div>
<div class="a t" style="left:135px;top:65px;font-size:12px">Y2</div>
<div class="a btn" style="left:155px;top:58px;width:25px;height:25px"></div>
<div class="a t" style="left:160px;top:65px;font-size:12px">Y3</div>
<div class="a btn" style="left:187px;top:58px;width:25px;height:25px"></div>
<svg class="a" style="left:187px;top:58px" width="25" height="25" viewBox="0 0 25 25"><path d="M13 2.7 L23.3 13 L15.3 13 L15.3 22.8 L11 22.8 L11 13 L3 13 Z" fill="#000"/></svg>
<div class="a btn" style="left:212px;top:58px;width:25px;height:25px"></div>
<svg class="a" style="left:212px;top:58px" width="25" height="25" viewBox="0 0 25 25"><path d="M13 23 L23.3 12.7 L15.3 12.7 L15.3 3 L11 3 L11 12.7 L3 12.7 Z" fill="#000"/></svg>
<div class="a btn" style="left:237px;top:58px;width:25px;height:25px"></div>
<svg class="a" style="left:237px;top:58px" width="25" height="25" viewBox="0 0 25 25"><path d="M12.9 2.7 L22 12 L3.8 12 Z M3.8 14 L22 14 L12.9 23 Z" fill="#000"/></svg>
<div class="a btn" style="left:262px;top:58px;width:25px;height:25px"></div>
<svg class="a" style="left:262px;top:58px" width="25" height="25" viewBox="0 0 25 25"><path d="M3.8 2.7 L22 2.7 L12.9 12.9 Z M12.9 12.9 L22 23 L3.8 23 Z" fill="#000"/></svg>
<div class="a btn" style="left:294px;top:58px;width:25px;height:25px"></div>
<svg class="a" style="left:294px;top:58px" width="25" height="25" viewBox="0 0 25 25"><path d="M4 13 L13 3.5 L13 22.5 Z M12.5 13 L21.5 3.5 L21.5 22.5 Z" fill="#000"/></svg>
<div class="a btn" style="left:319px;top:58px;width:25px;height:25px"></div>
<svg class="a" style="left:319px;top:58px" width="25" height="25" viewBox="0 0 25 25"><path d="M2.5 12.5 L12 3.5 L12 10.5 L23.5 10.5 L23.5 14.5 L12 14.5 L12 22 Z" fill="#000"/></svg>
<div class="a btn" style="left:344px;top:58px;width:25px;height:25px"></div>
<svg class="a" style="left:344px;top:58px" width="25" height="25" viewBox="0 0 25 25"><rect x="7" y="7" width="12" height="11.5" fill="#000"/></svg>
<div class="a btn" style="left:369px;top:58px;width:25px;height:25px"></div>
<svg class="a" style="left:369px;top:58px" width="25" height="25" viewBox="0 0 25 25"><path d="M23 12.5 L13.5 3.5 L13.5 10.5 L2 10.5 L2 14.5 L13.5 14.5 L13.5 22 Z" fill="#000"/></svg>
<div class="a btn" style="left:394px;top:58px;width:25px;height:25px"></div>
<svg class="a" style="left:394px;top:58px" width="25" height="25" viewBox="0 0 25 25"><path d="M3.6 3.5 L12.6 13 L3.6 22.5 Z M12.2 3.5 L21.7 13 L12.2 22.5 Z" fill="#000"/></svg>
<div class="a btn" style="left:419px;top:58px;width:25px;height:25px"></div>
<svg class="a" style="left:419px;top:58px" width="25" height="25" viewBox="0 0 25 25"><path d="M11.5 3.5 L2.6 13 L11.5 22.5 Z M13.8 3.5 L23.6 13 L13.8 22.5 Z" fill="#000"/></svg>
<div class="a btn" style="left:444px;top:58px;width:25px;height:25px"></div>
<svg class="a" style="left:444px;top:58px" width="25" height="25" viewBox="0 0 25 25"><path d="M2.5 3.5 L12.5 13 L2.5 22.5 Z M23.5 3.5 L13.5 13 L23.5 22.5 Z" fill="#000"/></svg>
<div class="a btn" style="left:479px;top:58px;width:25px;height:25px"></div>
<svg class="a" style="left:479px;top:58px" width="25" height="25" viewBox="0 0 25 25"><path d="M5.5 5 V20.5 H21 M5.5 7.5 H21 M5.5 11.5 H21 M5.5 15.5 H21" stroke="#777" stroke-width="1" fill="none"/><path d="M7 22 V20.5 M10 22 V20.5 M13 22 V20.5 M16 22 V20.5 M19 22 V20.5" stroke="#555" stroke-width="1"/><path d="M13.5 5 V20" stroke="#2020E0" stroke-width="1.3"/><path d="M6.5 18 Q10 17 13.5 8 Q17 17 20.5 18" stroke="#E02020" fill="none" stroke-width="1"/></svg>
<!-- chart frame -->
<div class="a thin-up" style="left:23px;top:95px;width:839px;height:838px"></div>
<div class="a" style="left:31px;top:103px;width:823px;height:770px;background:#fff"></div>
<div class="a" style="left:31px;top:873px;width:823px;height:2px;background:#D4D0C8"></div>
<div class="a" style="left:31px;top:875px;width:135px;height:39px;background:#fff"></div>
<div class="a t mono" style="left:32px;top:876px;font-size:13px;letter-spacing:0.75px;transform:scaleX(0.8);transform-origin:0 0;color:#800000">Comp-low</div>
<div class="a t mono" style="left:32px;top:889px;font-size:13px;letter-spacing:0.75px;transform:scaleX(0.8);transform-origin:0 0;color:#800000">CH1 [°C]</div>
<div class="a t mono" style="left:32px;top:902px;font-size:13px;letter-spacing:0.75px;transform:scaleX(0.8);transform-origin:0 0;color:#800000">-----</div>
<div class="a" style="left:168px;top:875px;width:135px;height:39px;background:#fff"></div>
<div class="a t mono" style="left:169px;top:876px;font-size:13px;letter-spacing:0.75px;transform:scaleX(0.8);transform-origin:0 0;color:#9A9A10">Comp-High</div>
<div class="a t mono" style="left:169px;top:889px;font-size:13px;letter-spacing:0.75px;transform:scaleX(0.8);transform-origin:0 0;color:#9A9A10">CH2 [°C]</div>
<div class="a t mono" style="left:169px;top:902px;font-size:13px;letter-spacing:0.75px;transform:scaleX(0.8);transform-origin:0 0;color:#9A9A10">-----</div>
<div class="a" style="left:305px;top:875px;width:135px;height:39px;background:#fff"></div>
<div class="a t mono" style="left:306px;top:876px;font-size:13px;letter-spacing:0.75px;transform:scaleX(0.8);transform-origin:0 0;color:#1478D2">MDF-330-2(-50)</div>
<div class="a t mono" style="left:306px;top:889px;font-size:13px;letter-spacing:0.75px;transform:scaleX(0.8);transform-origin:0 0;color:#1478D2">CH3 [°C]</div>
<div class="a t mono" style="left:306px;top:902px;font-size:13px;letter-spacing:0.75px;transform:scaleX(0.8);transform-origin:0 0;color:#1478D2">-62.8</div>
<div class="a" style="left:442px;top:875px;width:135px;height:39px;background:#fff"></div>
<div class="a t mono" style="left:443px;top:889px;font-size:13px;letter-spacing:0.75px;transform:scaleX(0.8);transform-origin:0 0;color:#30C030">CH4 []</div>
<div class="a t mono" style="left:443px;top:902px;font-size:13px;letter-spacing:0.75px;transform:scaleX(0.8);transform-origin:0 0;color:#30C030">-----</div>
<div class="a" style="left:579px;top:875px;width:135px;height:39px;background:#fff"></div>
<div class="a t mono" style="left:580px;top:876px;font-size:13px;letter-spacing:0.75px;transform:scaleX(0.8);transform-origin:0 0;color:#000000">MDF-190</div>
<div class="a t mono" style="left:580px;top:889px;font-size:13px;letter-spacing:0.75px;transform:scaleX(0.8);transform-origin:0 0;color:#000000">CH5 [°C]</div>
<div class="a t mono" style="left:580px;top:902px;font-size:13px;letter-spacing:0.75px;transform:scaleX(0.8);transform-origin:0 0;color:#000000">-61.9</div>
<div class="a" style="left:716px;top:875px;width:135px;height:39px;background:#fff"></div>
<div class="a t mono" style="left:717px;top:876px;font-size:13px;letter-spacing:0.75px;transform:scaleX(0.8);transform-origin:0 0;color:#C00000">2110Temp</div>
<div class="a t mono" style="left:717px;top:889px;font-size:13px;letter-spacing:0.75px;transform:scaleX(0.8);transform-origin:0 0;color:#C00000">CH6 [mV]</div>
<div class="a t mono" style="left:717px;top:902px;font-size:13px;letter-spacing:0.75px;transform:scaleX(0.8);transform-origin:0 0;color:#C00000">-82.6</div>
<svg class="a" style="left:0;top:0" width="1680" height="1050" viewBox="0 0 1680 1050" shape-rendering="crispEdges">
<line x1="94.5" y1="125" x2="94.5" y2="827" stroke="#600000" stroke-width="1"/>
<line x1="86" y1="126.5" x2="94" y2="126.5" stroke="#600000" stroke-width="1"/>
<line x1="86" y1="193.5" x2="94" y2="193.5" stroke="#600000" stroke-width="1"/>
<line x1="86" y1="261.5" x2="94" y2="261.5" stroke="#600000" stroke-width="1"/>
<line x1="86" y1="329.5" x2="94" y2="329.5" stroke="#600000" stroke-width="1"/>
<line x1="86" y1="397.5" x2="94" y2="397.5" stroke="#600000" stroke-width="1"/>
<line x1="86" y1="465.5" x2="94" y2="465.5" stroke="#600000" stroke-width="1"/>
<line x1="86" y1="533.5" x2="94" y2="533.5" stroke="#600000" stroke-width="1"/>
<line x1="86" y1="601.5" x2="94" y2="601.5" stroke="#600000" stroke-width="1"/>
<line x1="86" y1="669.5" x2="94" y2="669.5" stroke="#600000" stroke-width="1"/>
<line x1="86" y1="737.5" x2="94" y2="737.5" stroke="#600000" stroke-width="1"/>
<line x1="86" y1="804.5" x2="94" y2="804.5" stroke="#600000" stroke-width="1"/>
<rect x="94.5" y="804.5" width="680" height="22" fill="none" stroke="#000" stroke-width="1"/>
<line x1="95.5" y1="826" x2="95.5" y2="835" stroke="#000" stroke-width="1"/>
<line x1="208.5" y1="826" x2="208.5" y2="835" stroke="#000" stroke-width="1"/>
<line x1="321.5" y1="826" x2="321.5" y2="835" stroke="#000" stroke-width="1"/>
<line x1="434.5" y1="826" x2="434.5" y2="835" stroke="#000" stroke-width="1"/>
<line x1="548.5" y1="826" x2="548.5" y2="835" stroke="#000" stroke-width="1"/>
<line x1="661.5" y1="826" x2="661.5" y2="835" stroke="#000" stroke-width="1"/>
<line x1="774.5" y1="826" x2="774.5" y2="835" stroke="#000" stroke-width="1"/>
</svg>
<svg class="a" style="left:0;top:0" width="1680" height="1050" viewBox="0 0 1680 1050">
<polyline points="94.7,561.2 95.9,561.7 97.1,561.2 98.3,561.5 99.5,561.4 100.7,560.2 101.9,560.0 103.2,561.5 104.4,560.2 105.6,560.0 106.8,561.4 108.0,560.2 109.2,560.8 110.4,560.0 111.6,560.2 112.8,559.3 113.9,560.5 115.1,561.1 116.3,560.5 117.5,561.1 118.7,561.1 119.8,560.0 121.0,561.6 122.2,561.4 123.3,561.0 124.5,560.6 125.7,562.4 126.9,561.7 128.1,562.4 129.2,562.8 130.4,562.7 131.6,563.2 132.8,562.3 133.9,563.3 135.1,562.7 136.3,563.8 137.5,563.9 138.6,562.4 139.8,562.7 141.0,562.7 142.2,564.1 143.4,563.0 144.6,563.2 145.8,562.5 147.0,562.8 148.2,562.5 149.4,562.3 150.6,562.6 151.8,562.5 153.0,563.1 154.2,562.5 155.4,562.9 156.6,562.7 157.8,562.8 159.0,562.1 160.2,561.0 161.4,562.3 162.6,562.4 163.8,562.2 165.0,561.4 166.2,561.6 167.4,560.5 168.6,561.6 169.8,561.0 171.0,560.3 172.2,559.8 173.4,561.2 174.6,561.4 175.8,559.5 177.0,560.8 178.2,559.9 179.4,559.3 180.6,559.5 181.8,560.4 183.0,560.5 184.2,558.7 185.4,559.7 186.6,558.5 187.8,559.7 189.0,558.9 190.2,560.1 191.4,560.5 192.7,559.7 193.9,560.8 195.1,559.6 196.3,559.3 197.5,560.5 198.7,559.5 200.0,560.0 201.2,560.5 202.4,561.1 203.6,560.3 204.8,560.3 206.0,562.1 207.3,561.1 208.5,562.6 209.7,562.6 210.9,561.7 212.1,562.0 213.3,562.3 214.6,562.7 215.8,562.7 217.0,562.8 218.2,562.8 219.4,563.3 220.6,562.4 221.8,562.1 223.0,562.6 224.2,561.5 225.4,561.5 226.6,562.7 227.8,561.7 228.9,561.6 230.1,560.4 231.3,561.1 232.5,561.3 233.7,560.1 234.9,561.2 236.1,561.1 237.3,559.8 238.5,560.9 239.7,561.0 240.8,562.0 242.0,561.8 243.2,563.1 244.3,563.6 245.5,562.7 246.7,563.3 247.8,565.0 249.0,566.1 250.2,564.9 251.4,565.5 252.5,566.0 253.7,565.6 254.9,565.9 256.1,566.0 257.2,566.3 258.4,567.0 259.6,566.6 260.8,566.4 262.0,566.8 263.1,565.0 264.3,565.7 265.5,565.7 266.6,564.5 267.8,563.9 269.0,564.7 270.2,563.3 271.4,562.8 272.5,562.9 273.7,563.1 274.9,561.3 276.1,561.1 277.2,560.5 278.4,560.8 279.6,559.4 280.8,559.6 281.9,557.6 283.1,557.3 284.3,557.3 285.5,557.7 286.7,556.8 287.9,556.3 289.1,556.1 290.3,556.9 291.6,556.1 292.8,557.3 294.0,557.4 295.2,556.0 296.4,556.2 297.6,557.2 298.8,556.8 300.0,557.1 301.2,556.1 302.4,555.7 303.6,555.9 304.9,556.9 306.1,555.8 307.3,555.9 308.5,556.0 309.7,556.0 310.9,555.9 312.1,556.9 313.3,555.3 314.5,555.0 315.7,556.8 317.0,556.7 318.2,556.8 319.4,555.7 320.6,556.7 321.8,556.6 323.0,555.1 324.2,556.4 325.4,556.8 326.5,556.7 327.7,556.7 328.9,556.4 330.1,556.8 331.2,556.8 332.4,556.7 333.6,558.0 334.8,557.6 336.0,558.9 337.1,557.6 338.3,559.5 339.5,559.4 340.7,560.0 341.8,560.2 343.0,560.5 344.2,560.1 345.4,558.9 346.6,560.3 347.8,559.2 349.0,559.4 350.2,560.1 351.4,559.8 352.7,559.5 353.9,560.6 355.1,559.9 356.3,559.3 357.5,559.1 358.7,560.3 359.9,559.5 361.1,560.1 362.3,559.2 363.5,558.9 364.7,559.5 365.9,560.0 367.1,558.7 368.4,559.9 369.6,560.2 370.8,559.9 372.0,559.9 373.2,558.3 374.4,559.5 375.6,559.9 376.2,545.1 377.6,546.0 378.2,554.5 379.4,556.5 380.6,556.5 381.7,556.9 382.9,557.8 384.1,556.5 385.3,556.9 386.4,557.3 387.6,557.6 388.8,557.8 390.0,559.9 391.1,559.9 392.3,558.7 393.5,559.8 394.7,559.7 395.8,559.9 397.0,560.3 398.2,560.8 399.4,560.5 400.6,560.0 401.8,559.5 403.0,559.7 404.2,559.2 405.4,559.9 406.6,560.1 407.8,559.3 408.9,558.6 410.1,558.7 411.3,559.0 412.5,559.3 413.7,559.6 414.9,558.7 416.1,559.4 417.3,558.9 418.5,558.4 419.7,558.2 420.9,558.3 422.1,558.6 423.3,557.9 424.5,558.4 425.7,557.8 426.9,557.2 428.1,557.7 429.2,557.9 430.4,556.6 431.6,557.1 432.8,557.0 434.0,557.8 435.2,557.8 436.4,556.6 437.6,557.5 438.8,557.2 440.0,556.0 441.2,556.4 442.4,555.6 443.6,556.9 444.9,556.6 446.1,556.9 447.3,556.7 448.5,556.4 449.7,556.4 450.9,556.0 452.1,555.1 453.4,556.0 454.6,554.7 455.8,554.9 457.0,556.1 458.2,554.6 459.4,554.6 460.6,554.6 461.8,556.1 463.1,554.6 464.3,554.2 465.5,555.8 466.7,554.3 467.9,555.7 469.1,555.3 470.3,555.5 471.6,555.7 472.8,554.9 474.0,555.3 475.2,553.7 476.4,555.6 477.6,555.6 478.7,556.6 479.9,555.9 481.1,557.7 482.3,558.5 483.4,557.3 484.6,558.3 485.8,559.3 487.0,560.0 488.1,558.9 489.3,558.9 490.5,559.2 491.7,560.0 492.9,560.4 494.0,559.8 495.2,559.9 496.4,560.0 497.5,560.1 498.7,560.3 499.9,559.8 501.1,560.3 502.2,560.9 503.4,559.4 504.6,559.8 505.8,558.3 506.9,559.0 508.1,558.8 509.3,558.3 510.5,557.7 511.6,557.3 512.8,557.3 514.0,557.5 515.2,555.7 516.3,555.2 517.5,556.2 518.7,556.9 519.8,556.5 521.0,556.8 522.2,557.7 523.3,557.0 524.5,557.6 525.7,557.8 526.8,559.0 528.0,558.8 529.2,558.7 530.4,559.6 531.6,560.1 532.8,558.8 534.0,559.7 535.2,559.1 536.4,560.0 537.6,559.5 538.8,558.9 540.0,558.8 541.2,558.4 542.4,559.3 543.6,559.1 544.8,558.7 546.0,559.1 547.2,559.1 548.4,560.0 549.6,558.7 550.8,560.4 552.0,559.4 553.2,559.7 554.4,559.4 555.6,560.2 556.8,560.2 558.0,559.7 559.2,559.5 560.4,560.0 561.6,560.3 562.8,559.4 564.0,560.1 565.2,560.6 566.4,559.6 567.6,559.1 568.8,559.1 570.0,560.1 571.2,560.1 572.4,560.6 573.6,560.4 574.8,559.2 576.0,559.1 577.2,559.3 578.4,559.2 579.6,560.2 580.8,560.5 582.0,560.6 583.2,559.4 584.4,560.6 585.6,559.5 586.8,559.7 588.0,560.4 589.2,558.5 590.3,557.9 591.5,558.8 592.7,557.2 593.8,556.7 595.0,556.6 596.2,556.8 597.4,555.6 598.5,556.3 599.7,556.6 600.9,556.7 602.0,556.2 603.2,557.1 604.4,557.9 605.6,556.8 606.8,557.2 607.9,556.4 609.1,556.8 610.3,557.7 611.5,556.6 612.6,558.2 613.8,558.4 615.0,556.8 616.2,558.6 617.3,557.5 618.5,558.4 619.7,558.4 620.9,557.5 622.0,558.4 623.2,558.4 624.4,559.9 625.5,560.0 626.7,562.1 627.9,562.6 629.1,562.2 630.3,562.0 631.5,561.3 632.7,562.2 634.0,562.0 635.2,562.8 636.4,562.9 637.6,562.7 638.8,562.1 640.0,563.1 641.2,563.2 642.4,562.4 643.6,564.0 644.8,563.6 646.0,562.6 647.3,564.4 648.5,562.9 649.7,563.4 650.9,564.3 652.1,564.2 653.3,564.2 654.5,564.5 655.7,564.2 656.9,564.0 658.1,563.9 659.4,563.8 660.6,565.2 661.8,565.4 663.0,565.1 664.2,565.6 665.4,564.9 666.6,564.6 667.8,564.8 668.9,565.6 670.1,563.9 671.3,564.7 672.5,564.1 673.6,565.0 674.8,564.1 676.0,564.0 677.2,564.0 678.4,564.2 679.5,564.5 680.7,563.6 681.9,564.5 683.1,562.9 684.2,563.1 685.4,562.7 686.6,562.6 687.8,564.1 688.9,564.1 690.1,563.2 691.3,563.3 692.5,563.9 693.6,564.7 694.8,565.0 696.0,565.0 697.2,564.8 698.3,564.1 699.5,564.7 700.7,564.5 701.8,565.3 703.0,565.5 704.2,564.9 705.4,565.1 706.5,566.3 707.7,565.0 708.9,566.6 710.0,566.9 711.2,567.1 712.4,566.1 713.6,566.6 714.7,566.7 715.9,567.0 717.1,567.8 718.3,567.3 719.4,566.6 720.6,567.9 721.8,567.2 723.0,567.6 724.1,567.9 725.3,566.6 726.5,568.1 727.6,567.8 728.8,567.5 730.0,567.5 731.2,567.3 732.3,566.8 733.5,567.4 734.7,566.4 735.8,567.3 737.0,567.5 738.2,567.1 739.4,567.3 740.5,568.0 741.7,567.8 742.9,566.3 744.1,567.6 745.2,567.2 746.4,566.0 747.6,566.9 748.7,566.8 749.9,566.8 751.1,567.9 752.3,568.9 753.4,567.9 754.6,569.3 755.8,569.2 757.0,568.3 758.1,569.9 759.3,569.7 760.5,570.6 761.7,570.4 762.8,570.6 764.0,570.1 765.3,570.5 766.5,570.3 767.8,569.6 769.1,568.3 770.4,568.4 771.6,567.4 772.9,566.9" fill="none" stroke="#E00808" stroke-width="1.7"/>
<polyline points="95.0,338.4 95.1,339.9 95.0,342.1 95.9,340.8 99.1,348.6 99.7,348.0 100.4,347.3 101.1,346.0 101.9,344.6 102.7,343.5 103.6,341.6 104.5,340.4 105.5,339.2 106.5,337.2 107.6,335.4 108.6,334.4 109.7,332.5 110.9,330.4 112.0,328.7 113.2,327.0 114.3,325.2 115.5,323.0 116.7,321.0 117.9,319.3 119.1,318.0 120.2,315.6 121.4,314.1 122.6,312.0 123.7,310.2 124.8,308.5 125.9,307.0 127.0,305.1 128.0,303.4 129.0,301.9 129.9,300.5 130.8,299.4 131.7,297.6 132.5,296.3 133.9,301.0 135.1,304.7 136.2,308.5 137.2,311.0 138.2,314.2 139.1,317.0 139.9,319.2 140.7,322.6 141.5,324.3 142.3,326.6 143.1,329.5 144.0,331.8 144.9,335.0 145.8,337.7 146.9,340.7 148.0,347.1 149.3,350.5 150.7,352.7 151.5,352.4 152.3,351.2 153.2,350.5 154.1,348.7 155.1,347.3 156.1,344.0 157.1,343.0 158.1,341.1 159.2,339.1 160.2,337.2 161.3,336.0 162.4,334.5 163.6,332.3 164.7,329.9 165.8,328.1 167.0,326.3 168.1,324.6 169.3,322.6 170.4,320.8 171.5,319.5 172.7,318.0 173.8,315.5 174.9,314.5 176.0,312.2 177.1,310.8 178.1,309.2 179.2,307.6 180.2,305.0 181.2,303.7 182.1,302.5 183.1,301.3 183.9,299.1 184.8,297.9 185.6,297.1 187.0,300.5 188.3,304.5 189.5,307.8 190.6,311.3 191.6,314.4 192.5,316.3 193.4,319.4 194.2,321.8 195.0,324.3 195.9,326.4 196.7,329.2 197.6,331.1 198.5,333.8 199.5,336.5 200.6,340.1 201.7,345.8 203.0,348.2 204.4,350.6 205.2,350.4 206.0,349.4 206.9,348.5 207.8,347.1 208.8,345.9 209.7,342.5 210.7,341.6 211.7,339.3 212.8,338.2 213.8,336.9 214.9,335.2 216.0,333.0 217.1,331.5 218.2,330.4 219.3,328.5 220.4,327.1 221.5,325.4 222.6,323.2 223.7,322.0 224.9,320.1 226.0,318.1 227.1,316.4 228.2,314.5 229.2,313.2 230.3,312.1 231.3,309.7 232.4,308.6 233.4,306.6 234.4,305.1 235.3,304.2 236.2,302.4 237.1,300.9 238.0,299.7 238.8,298.9 240.1,302.3 241.4,304.9 242.5,308.0 243.6,311.5 244.6,313.4 245.6,316.3 246.5,318.5 247.4,321.2 248.3,323.2 249.1,325.6 250.0,327.6 250.9,329.4 251.7,331.7 252.6,333.9 253.6,337.0 254.6,338.8 255.6,341.4 256.7,347.3 257.9,348.7 259.1,351.3 260.0,349.7 260.8,349.1 261.7,347.7 262.7,347.0 263.6,345.4 264.6,342.0 265.6,340.5 266.7,339.0 267.7,336.8 268.7,335.3 269.8,333.4 270.9,331.3 272.0,330.3 273.1,328.3 274.2,326.7 275.3,324.3 276.4,322.9 277.5,321.0 278.5,319.5 279.6,317.1 280.7,315.6 281.8,314.0 282.8,311.9 283.8,310.7 284.9,309.2 285.9,307.3 286.8,305.9 287.8,304.3 288.7,302.4 289.6,301.1 290.5,300.3 291.7,302.5 292.9,305.2 294.0,307.4 295.0,309.9 296.0,312.1 296.9,315.1 297.8,317.0 298.7,319.2 299.6,321.4 300.5,323.0 301.4,325.3 302.3,327.0 303.2,329.0 304.1,331.7 305.1,333.9 306.1,336.3 307.2,338.3 308.3,341.2 309.5,346.1 310.8,348.7 312.2,350.3 313.0,348.8 313.8,348.4 314.7,346.5 315.6,345.1 316.5,344.3 317.5,342.4 318.5,339.1 319.5,337.5 320.5,335.1 321.6,334.1 322.6,331.8 323.7,330.1 324.8,328.1 325.9,326.6 327.0,324.7 328.1,322.3 329.2,320.2 330.4,318.5 331.5,316.7 332.6,314.4 333.7,312.6 334.8,311.3 335.9,309.3 337.0,307.7 338.1,305.9 339.2,303.9 340.2,301.6 341.3,299.6 342.3,298.0 343.3,296.5 344.2,294.9 345.2,293.2 346.1,291.5 347.0,290.5 347.8,288.4 348.7,287.2 349.5,286.3 350.2,284.9 351.7,289.7 353.1,294.4 354.2,299.1 355.3,301.9 356.2,305.3 357.1,308.7 357.9,311.4 358.6,313.7 359.3,316.1 360.1,318.8 360.8,322.1 361.6,324.6 362.5,328.3 363.5,331.6 364.7,335.7 365.9,341.2 367.4,344.5 368.2,343.6 369.0,343.2 369.8,342.2 370.7,340.8 371.7,340.0 372.6,338.2 373.6,335.0 374.6,333.4 375.7,332.4 376.7,330.3 377.8,328.5 378.9,326.6 380.0,325.3 381.1,323.8 382.3,322.1 383.4,320.6 384.5,318.7 385.7,316.4 386.8,314.5 387.9,313.4 389.1,311.7 390.2,309.6 391.3,308.3 392.4,306.3 393.5,304.4 394.5,302.6 395.6,300.9 396.6,299.9 397.6,298.6 398.5,297.2 399.5,295.3 400.4,294.1 401.2,293.1 402.0,291.7 402.8,290.3 404.3,294.1 405.6,297.7 406.7,300.5 407.8,303.4 408.8,306.5 409.6,309.2 410.5,311.0 411.3,313.0 412.0,315.0 412.8,317.2 413.6,319.7 414.5,321.7 415.4,324.6 416.3,326.5 417.4,332.0 418.6,334.5 420.0,336.6 420.8,336.2 421.6,335.3 422.5,334.2 423.4,332.7 424.4,330.7 425.4,328.2 426.4,326.6 427.4,324.9 428.4,323.0 429.5,321.7 430.6,320.2 431.7,317.7 432.8,316.5 433.9,314.4 435.0,312.8 436.1,311.4 437.3,309.6 438.4,307.5 439.5,305.3 440.6,304.3 441.7,301.8 442.8,300.3 443.8,299.0 444.9,296.9 445.9,295.2 446.9,294.3 447.8,292.7 448.8,290.6 449.7,289.2 450.6,287.7 451.4,286.2 452.7,290.2 453.9,294.5 455.0,297.0 456.0,300.2 456.9,303.1 457.9,305.8 458.7,308.9 459.6,311.7 460.4,314.3 461.3,316.6 462.1,319.4 463.0,321.2 463.9,324.2 464.8,327.7 465.8,329.8 466.9,333.3 468.0,339.5 469.3,342.0 470.6,344.8 471.4,343.7 472.3,343.0 473.2,342.7 474.1,340.8 475.1,340.3 476.1,336.3 477.1,335.6 478.2,333.7 479.2,332.1 480.3,329.9 481.4,328.2 482.5,327.2 483.7,325.0 484.8,323.3 486.0,322.2 487.1,320.5 488.2,318.0 489.4,317.2 490.5,315.1 491.7,313.2 492.8,311.3 493.9,309.9 495.0,308.9 496.1,306.6 497.1,304.9 498.1,303.3 499.2,301.8 500.1,300.6 501.1,299.7 502.0,297.5 502.9,296.3 503.7,295.8 504.5,294.7 505.9,298.7 507.2,301.6 508.3,304.9 509.2,308.3 510.1,310.4 510.9,312.9 511.7,314.7 512.4,316.6 513.1,319.0 513.9,321.5 514.7,323.9 515.6,326.1 516.5,328.8 517.6,331.9 518.8,335.3 520.1,341.2 521.7,344.1 522.4,342.9 523.2,342.6 524.0,342.1 524.9,341.1 525.8,339.4 526.7,339.1 527.6,336.2 528.6,334.2 529.6,333.0 530.6,331.6 531.7,330.0 532.7,329.5 533.8,327.5 534.9,326.5 536.0,324.3 537.1,322.7 538.2,322.1 539.4,320.5 540.5,319.2 541.6,317.3 542.8,315.7 543.9,314.4 545.0,312.2 546.1,311.2 547.3,309.6 548.4,307.8 549.4,306.8 550.5,305.1 551.6,303.9 552.6,302.4 553.6,301.0 554.6,299.7 555.6,298.7 556.5,297.8 557.4,296.5 558.3,295.3 559.1,294.1 559.9,292.5 560.7,292.2 562.2,295.2 563.6,298.7 564.9,302.4 566.2,305.9 567.4,308.5 568.5,311.7 569.6,314.1 570.6,317.3 571.6,319.3 572.6,321.7 573.5,324.1 574.3,326.6 575.2,328.9 576.0,330.5 576.8,332.4 577.6,334.8 578.4,336.3 579.1,338.6 579.9,340.6 581.2,340.5 582.3,337.4 583.2,337.3 583.9,336.1 584.6,336.0 585.4,334.6 586.2,333.6 587.2,332.9 588.5,332.0 590.0,329.9 590.7,329.2 591.5,327.7 592.4,326.0 593.3,324.5 594.2,323.2 595.2,321.5 596.2,319.9 597.2,318.5 598.3,317.0 599.4,315.0 600.5,312.8 601.6,311.1 602.7,309.4 603.8,307.9 604.9,305.6 606.1,303.8 607.2,302.2 608.3,300.4 609.3,298.4 610.4,297.2 611.4,296.0 612.4,294.0 613.4,292.6 614.3,291.2 615.4,294.3 616.4,297.3 617.4,299.5 618.4,302.4 619.3,304.3 620.1,307.5 621.0,309.3 621.8,311.8 622.7,314.5 623.6,316.3 624.4,318.7 625.4,321.8 626.3,324.3 627.3,326.6 628.4,329.5 629.5,333.0 630.8,338.6 632.1,342.0 633.5,343.8 634.3,343.3 635.1,342.7 636.0,341.9 636.9,340.9 637.8,340.0 638.8,338.9 639.8,335.7 640.8,334.0 641.9,333.5 642.9,331.8 644.0,329.8 645.1,328.7 646.2,327.5 647.3,326.3 648.4,323.9 649.6,322.3 650.7,321.3 651.9,319.7 653.0,318.7 654.1,317.1 655.3,315.1 656.4,313.7 657.5,312.4 658.6,311.2 659.7,309.1 660.8,307.8 661.9,306.1 662.9,305.3 663.9,303.3 664.9,302.9 665.9,301.2 666.9,300.0 667.8,298.3 668.7,297.3 669.5,296.4 670.3,295.8 671.7,298.7 673.0,301.5 674.3,304.9 675.4,307.2 676.4,309.4 677.4,311.4 678.3,313.6 679.2,316.2 680.1,317.4 680.9,319.8 681.8,321.8 682.7,323.5 683.5,326.0 684.5,328.2 685.4,330.4 686.5,332.7 687.6,336.7 688.8,338.5 690.1,340.6 690.9,339.7 691.8,338.6 692.8,338.1 693.7,336.2 694.7,335.3 695.7,332.4 696.7,329.9 697.8,329.1 698.8,326.9 699.9,325.0 701.0,323.3 702.1,321.4 703.2,320.1 704.3,318.2 705.5,316.9 706.6,315.1 707.7,312.6 708.8,311.2 709.9,309.4 711.0,307.5 712.1,305.9 713.2,304.2 714.3,302.9 715.3,301.0 716.3,299.1 717.3,297.7 718.3,296.4 719.2,295.1 720.1,293.3 721.0,292.4 721.8,290.6 723.1,295.3 724.4,299.0 725.5,302.1 726.5,306.0 727.5,308.7 728.4,311.7 729.3,314.5 730.2,317.2 731.0,319.7 731.8,321.9 732.7,325.3 733.6,328.2 734.5,330.8 735.5,334.0 736.6,337.0 737.8,344.0 739.0,346.7 740.4,348.9 741.2,348.9 742.1,348.3 743.0,346.7 744.0,346.3 745.0,344.6 746.0,340.7 747.1,339.6 748.2,337.6 749.3,336.4 750.5,334.6 751.7,332.4 752.9,331.1 754.1,329.6 755.3,327.5 756.5,325.8 757.7,324.4 758.9,322.2 760.0,320.6 761.2,318.9 762.4,317.5 763.5,315.2 764.6,313.5 765.7,312.6 766.7,310.9 767.7,309.2 768.7,308.4 769.6,307.1 770.4,305.5 771.2,304.8 772.0,303.5 772.6,302.4 773.3,301.1 773.8,300.0" fill="none" stroke="#1E7BC8" stroke-width="1.3"/>
<polyline points="95.0,309.5 95.6,307.7 96.4,304.8 97.5,302.0 99.1,299.8 99.8,300.9 100.7,302.9 101.6,304.9 102.7,307.1 103.7,309.4 104.8,312.2 105.9,314.5 107.0,317.1 108.1,318.8 109.2,320.7 110.2,321.9 111.2,320.5 112.3,318.6 113.3,316.0 114.3,313.4 115.2,311.0 116.2,308.1 117.2,305.8 118.3,303.2 119.3,301.1 120.4,299.8 121.3,301.3 122.3,302.8 123.3,304.4 124.4,306.4 125.4,308.3 126.5,310.8 127.5,313.1 128.5,315.8 129.6,317.3 130.6,319.7 131.6,320.9 132.5,322.1 133.6,320.3 134.6,318.8 135.6,315.9 136.6,313.6 137.5,310.9 138.5,308.0 139.5,305.5 140.5,303.7 141.5,301.6 142.6,300.0 143.6,301.4 144.5,302.6 145.6,305.0 146.6,307.4 147.7,309.5 148.7,312.2 149.8,315.1 150.8,317.1 151.9,319.7 152.9,321.3 153.9,323.4 154.8,324.4 156.0,322.9 157.1,320.5 158.1,318.2 159.2,315.3 160.2,312.2 161.2,309.5 162.2,306.7 163.3,304.7 164.4,302.6 165.4,304.2 166.3,306.0 167.3,308.0 168.4,310.1 169.4,312.7 170.4,315.6 171.5,317.8 172.5,320.6 173.5,322.5 174.5,324.6 175.5,325.8 176.5,324.1 177.6,321.8 178.6,319.1 179.5,316.8 180.5,314.2 181.5,311.5 182.5,308.3 183.5,305.8 184.5,304.3 185.6,302.5 186.6,303.6 187.6,305.5 188.7,307.1 189.8,309.7 190.9,312.2 192.0,314.7 193.1,316.9 194.1,319.2 195.2,321.6 196.3,323.5 197.3,324.3 198.4,322.7 199.5,320.8 200.5,319.0 201.6,316.3 202.6,313.7 203.7,311.4 204.7,308.7 205.8,306.1 206.8,304.5 207.9,302.5 208.9,303.8 209.9,305.7 210.9,307.2 211.9,309.2 213.0,311.8 214.0,314.0 215.0,316.6 216.0,318.1 217.0,320.5 218.0,321.8 219.0,323.3 220.1,321.7 221.1,320.0 222.1,317.6 223.1,315.2 224.1,312.9 225.1,310.7 226.1,308.0 227.1,305.8 228.1,304.1 229.2,302.5 230.2,304.0 231.2,305.9 232.3,307.9 233.4,310.2 234.5,312.4 235.5,314.7 236.6,317.1 237.7,319.6 238.8,321.5 239.8,323.4 240.8,324.4 241.9,323.1 242.9,320.8 243.9,318.4 244.9,315.7 245.8,312.8 246.8,309.9 247.8,307.1 248.8,304.4 249.8,302.7 250.9,300.8 251.9,301.7 253.0,303.8 254.0,305.5 255.1,307.7 256.2,309.9 257.3,312.0 258.4,314.9 259.5,316.5 260.6,318.6 261.7,320.7 262.7,321.3 263.8,320.1 264.9,318.2 266.0,315.9 267.0,313.9 268.0,311.1 269.1,308.3 270.1,306.2 271.2,303.7 272.2,302.3 273.3,301.1 274.3,302.4 275.3,303.6 276.3,306.2 277.4,308.2 278.4,310.8 279.4,313.2 280.5,315.6 281.5,317.8 282.5,320.2 283.4,321.5 284.4,323.4 285.5,320.9 286.6,319.1 287.6,315.8 288.6,312.7 289.6,310.1 290.7,306.9 291.7,304.3 292.8,301.7 294.0,299.9 294.9,300.8 295.9,302.9 296.9,304.8 298.0,307.5 299.0,309.3 300.1,311.9 301.1,314.8 302.2,317.5 303.2,319.5 304.3,321.7 305.2,323.3 306.2,324.5 307.3,322.9 308.3,321.0 309.3,318.2 310.3,315.7 311.2,313.3 312.2,310.2 313.1,307.7 314.1,305.0 315.2,302.9 316.3,301.4 317.3,302.5 318.3,304.1 319.4,305.5 320.5,307.2 321.6,309.4 322.7,311.4 323.8,313.7 324.9,316.1 326.0,318.0 327.0,319.5 328.0,320.9 329.0,321.8 330.2,319.9 331.3,317.7 332.4,314.7 333.4,312.2 334.4,308.9 335.4,305.8 336.4,303.1 337.5,300.4 338.6,299.0 339.6,300.1 340.6,301.4 341.7,303.5 342.8,305.3 343.9,307.5 344.9,309.8 346.0,312.1 347.1,314.5 348.2,316.4 349.2,318.0 350.2,318.7 351.4,317.3 352.5,314.8 353.6,312.1 354.7,309.2 355.7,306.3 356.8,303.2 357.8,300.7 358.8,298.6 359.8,297.0 360.9,298.4 362.1,299.8 363.3,302.5 364.5,304.9 365.6,307.3 366.5,309.6 367.4,310.7 368.0,312.2 368.7,306.0 368.5,298.7 368.5,301.7 369.0,314.3 369.9,317.4 371.2,322.2 372.5,326.1 373.5,327.6 374.2,309.0 374.5,298.8 374.4,305.1 375.0,317.9 375.6,317.0 376.5,315.3 377.4,313.4 378.5,310.4 379.7,307.8 380.9,306.3 382.1,304.3 383.0,305.5 383.9,307.5 384.9,308.9 385.9,310.9 387.0,313.7 388.1,315.5 389.1,317.5 390.2,319.9 391.2,320.9 392.2,322.4 393.3,319.9 394.3,317.2 395.3,314.2 396.4,311.1 397.4,307.8 398.4,304.5 399.5,301.5 400.6,298.8 401.8,297.0 402.7,298.3 403.7,299.8 404.7,301.9 405.8,303.6 406.8,306.2 407.9,308.6 408.9,311.1 410.0,314.1 411.0,316.3 412.1,318.4 413.1,319.8 414.0,320.7 415.1,319.2 416.1,316.8 417.1,314.8 418.1,311.6 419.0,308.8 419.9,306.3 420.9,303.1 421.9,301.0 422.9,298.4 424.0,296.9 424.9,297.8 425.9,300.0 427.0,301.7 428.0,303.9 429.1,306.5 430.1,309.0 431.2,311.3 432.2,313.6 433.3,316.2 434.3,317.8 435.3,320.0 436.2,320.9 437.4,318.8 438.4,316.4 439.5,313.4 440.5,310.4 441.5,307.4 442.5,304.2 443.5,301.2 444.6,298.7 445.8,296.8 446.8,298.2 447.8,299.6 448.8,301.9 449.9,303.9 451.0,306.1 452.1,308.7 453.2,311.7 454.3,313.9 455.4,316.1 456.5,318.1 457.5,320.0 458.5,320.9 459.6,319.0 460.7,316.6 461.7,313.7 462.7,311.1 463.6,308.0 464.6,304.9 465.6,302.0 466.6,299.3 467.6,297.2 468.6,295.0 469.6,296.8 470.6,298.0 471.6,300.6 472.6,302.5 473.6,305.5 474.7,307.7 475.7,310.1 476.7,312.8 477.7,315.2 478.7,316.9 479.7,318.3 480.7,316.5 481.8,313.6 482.8,311.2 483.7,308.2 484.7,305.6 485.7,302.4 486.7,299.7 487.7,297.1 488.7,294.9 489.8,292.8 490.8,294.1 491.9,295.5 492.9,297.2 494.0,300.0 495.1,301.8 496.2,304.2 497.3,307.1 498.4,309.0 499.4,311.3 500.5,312.5 501.5,313.8 502.6,312.5 503.6,309.9 504.6,307.8 505.6,305.4 506.6,302.2 507.5,299.8 508.5,297.1 509.5,294.6 510.5,292.6 511.6,290.8 512.6,291.5 513.7,293.2 514.7,295.3 515.8,297.7 516.9,299.5 518.0,302.0 519.1,304.0 520.2,306.6 521.2,308.2 522.2,309.8 523.2,311.0 524.3,308.8 525.3,306.9 526.3,304.3 527.2,301.5 528.1,298.2 529.1,295.4 530.1,292.7 531.1,290.9 532.3,288.7 533.2,289.8 534.2,291.4 535.3,293.4 536.4,295.2 537.5,297.5 538.6,300.2 539.7,302.6 540.8,304.5 541.9,306.5 543.0,309.0 544.0,310.4 545.0,311.5 546.1,309.7 547.2,308.0 548.2,305.3 549.2,302.5 550.1,299.8 551.1,297.3 552.0,294.8 553.0,292.3 554.0,290.7 555.1,288.8 556.1,289.8 557.1,291.5 558.2,293.3 559.3,295.4 560.4,297.6 561.5,299.9 562.6,302.1 563.6,304.5 564.7,305.9 565.8,307.9 566.8,308.8 567.9,307.6 569.0,305.2 570.0,303.2 571.1,300.7 572.1,298.3 573.1,295.4 574.2,293.0 575.2,290.7 576.3,289.1 577.4,287.8 578.4,288.9 579.5,291.1 580.5,293.5 581.6,296.7 582.7,299.1 583.8,302.0 584.9,304.6 586.0,307.4 587.0,309.9 588.0,311.7 589.0,312.7 590.1,310.9 591.2,308.3 592.2,305.0 593.2,302.3 594.2,298.6 595.2,295.3 596.3,292.5 597.4,289.7 598.5,287.5 599.5,288.9 600.5,290.3 601.6,292.2 602.7,294.2 603.9,297.0 605.0,299.3 606.1,301.8 607.3,304.0 608.3,305.8 609.4,307.5 610.4,308.8 611.6,306.8 612.7,305.0 613.7,302.1 614.7,298.9 615.7,296.3 616.8,293.3 617.8,290.2 618.9,288.4 620.0,286.2 621.0,288.0 622.0,289.2 623.0,291.4 624.0,293.7 625.1,296.6 626.1,299.2 627.2,301.5 628.3,303.5 629.3,305.9 630.3,307.8 631.3,308.7 632.4,307.7 633.4,305.6 634.4,303.3 635.4,300.6 636.4,297.8 637.4,295.4 638.4,292.3 639.4,289.9 640.4,287.7 641.5,286.2 642.5,287.8 643.5,288.9 644.5,291.3 645.6,293.3 646.6,295.9 647.7,298.2 648.7,300.5 649.8,302.8 650.8,304.2 651.8,305.9 652.8,307.2 653.9,305.7 654.9,303.8 655.9,301.6 656.9,298.9 657.9,296.4 658.9,293.5 659.9,290.7 660.9,288.4 661.9,286.5 663.0,284.9 664.0,285.7 665.1,287.2 666.2,289.2 667.3,291.0 668.4,293.7 669.5,295.3 670.6,298.0 671.7,300.0 672.8,301.6 673.8,303.4 674.8,304.5 676.0,303.2 677.0,301.1 678.1,298.5 679.1,296.1 680.1,293.4 681.2,290.4 682.2,288.5 683.3,286.5 684.4,285.0 685.4,286.2 686.4,287.8 687.4,289.7 688.4,292.4 689.5,294.6 690.5,297.5 691.6,299.8 692.7,302.4 693.7,304.1 694.7,305.8 695.7,307.6 696.8,305.8 697.8,303.6 698.8,301.4 699.8,298.8 700.8,296.2 701.8,293.5 702.7,290.7 703.8,288.8 704.8,286.6 705.9,284.9 706.9,285.6 708.0,287.0 709.1,289.2 710.2,291.2 711.3,293.3 712.5,295.2 713.6,297.7 714.7,299.6 715.8,301.3 716.8,302.9 717.8,303.9 719.0,302.3 720.0,300.3 721.1,298.0 722.1,294.8 723.1,292.4 724.1,290.1 725.2,287.5 726.2,285.3 727.4,283.8 728.4,284.4 729.4,286.5 730.5,288.3 731.6,290.4 732.7,292.4 733.9,294.9 735.0,296.8 736.1,299.2 737.2,301.0 738.3,303.0 739.3,304.1 740.4,302.5 741.4,300.9 742.5,298.5 743.4,296.3 744.4,293.7 745.4,291.8 746.4,289.4 747.4,287.4 748.4,285.1 749.5,284.3 750.5,285.1 751.5,287.3 752.6,289.4 753.6,291.5 754.7,294.3 755.8,297.2 756.8,299.5 757.9,301.6 758.9,304.0 759.9,305.4 760.8,307.1 761.9,304.8 763.1,302.2 764.2,300.0 765.2,296.3 766.3,293.4 767.3,290.8 768.2,287.5 769.0,285.5 769.8,283.9 771.2,283.9 772.4,284.8 773.2,286.3 773.8,287.2" fill="none" stroke="#000" stroke-width="1.35"/>
</svg>
<div class="a t mono" style="right:1593px;top:120px;font-size:13px;letter-spacing:0.75px;transform:scaleX(0.8);transform-origin:100% 0;color:#600000">-50.0</div>
<div class="a t mono" style="right:1593px;top:187px;font-size:13px;letter-spacing:0.75px;transform:scaleX(0.8);transform-origin:100% 0;color:#600000">-55.0</div>
<div class="a t mono" style="right:1593px;top:255px;font-size:13px;letter-spacing:0.75px;transform:scaleX(0.8);transform-origin:100% 0;color:#600000">-60.0</div>
<div class="a t mono" style="right:1593px;top:323px;font-size:13px;letter-spacing:0.75px;transform:scaleX(0.8);transform-origin:100% 0;color:#600000">-65.0</div>
<div class="a t mono" style="right:1593px;top:391px;font-size:13px;letter-spacing:0.75px;transform:scaleX(0.8);transform-origin:100% 0;color:#600000">-70.0</div>
<div class="a t mono" style="right:1593px;top:459px;font-size:13px;letter-spacing:0.75px;transform:scaleX(0.8);transform-origin:100% 0;color:#600000">-75.0</div>
<div class="a t mono" style="right:1593px;top:527px;font-size:13px;letter-spacing:0.75px;transform:scaleX(0.8);transform-origin:100% 0;color:#600000">-80.0</div>
<div class="a t mono" style="right:1593px;top:595px;font-size:13px;letter-spacing:0.75px;transform:scaleX(0.8);transform-origin:100% 0;color:#600000">-85.0</div>
<div class="a t mono" style="right:1593px;top:663px;font-size:13px;letter-spacing:0.75px;transform:scaleX(0.8);transform-origin:100% 0;color:#600000">-90.0</div>
<div class="a t mono" style="right:1593px;top:731px;font-size:13px;letter-spacing:0.75px;transform:scaleX(0.8);transform-origin:100% 0;color:#600000">-95.0</div>
<div class="a t mono" style="right:1593px;top:798px;font-size:13px;letter-spacing:0.75px;transform:scaleX(0.8);transform-origin:100% 0;color:#600000">-100.0</div>
<div class="a t mono" style="left:78px;top:108px;font-size:13px;letter-spacing:0.75px;transform:scaleX(0.8);transform-origin:0 0;color:#600000">Y1</div>
<div class="a t mono" style="left:99px;top:828px;font-size:13px;letter-spacing:0.75px;transform:scaleX(0.8);transform-origin:0 0;color:#000">2026/01/14</div>
<div class="a t mono" style="left:98px;top:841px;font-size:13px;letter-spacing:0.75px;transform:scaleX(0.8);transform-origin:0 0;color:#000">12:51:38.5</div>
<div class="a t mono" style="left:212px;top:828px;font-size:13px;letter-spacing:0.75px;transform:scaleX(0.8);transform-origin:0 0;color:#000">2026/01/14</div>
<div class="a t mono" style="left:211px;top:841px;font-size:13px;letter-spacing:0.75px;transform:scaleX(0.8);transform-origin:0 0;color:#000">15:00:02.0</div>
<div class="a t mono" style="left:325px;top:828px;font-size:13px;letter-spacing:0.75px;transform:scaleX(0.8);transform-origin:0 0;color:#000">2026/01/14</div>
<div class="a t mono" style="left:324px;top:841px;font-size:13px;letter-spacing:0.75px;transform:scaleX(0.8);transform-origin:0 0;color:#000">17:08:25.5</div>
<div class="a t mono" style="left:438px;top:828px;font-size:13px;letter-spacing:0.75px;transform:scaleX(0.8);transform-origin:0 0;color:#000">2026/01/14</div>
<div class="a t mono" style="left:437px;top:841px;font-size:13px;letter-spacing:0.75px;transform:scaleX(0.8);transform-origin:0 0;color:#000">19:16:49.0</div>
<div class="a t mono" style="left:552px;top:828px;font-size:13px;letter-spacing:0.75px;transform:scaleX(0.8);transform-origin:0 0;color:#000">2026/01/14</div>
<div class="a t mono" style="left:551px;top:841px;font-size:13px;letter-spacing:0.75px;transform:scaleX(0.8);transform-origin:0 0;color:#000">21:25:12.5</div>
<div class="a t mono" style="left:665px;top:828px;font-size:13px;letter-spacing:0.75px;transform:scaleX(0.8);transform-origin:0 0;color:#000">2026/01/14</div>
<div class="a t mono" style="left:664px;top:841px;font-size:13px;letter-spacing:0.75px;transform:scaleX(0.8);transform-origin:0 0;color:#000">23:33:36.0</div>
<div class="a t mono" style="left:778px;top:828px;font-size:13px;letter-spacing:0.75px;transform:scaleX(0.8);transform-origin:0 0;color:#000">2026/01/15</div>
<div class="a t mono" style="left:777px;top:841px;font-size:13px;letter-spacing:0.75px;transform:scaleX(0.8);transform-origin:0 0;color:#000">1:41:59.5</div>
<!-- alarm panel -->
<div class="a thin-up" style="left:23px;top:933px;width:839px;height:39px"></div>
<div class="a btn" style="left:31px;top:941px;width:81px;height:25px"></div>
<div class="a t" style="transform:scaleX(1.528);transform-origin:0 0;left:37px;top:946px;font-size:12px"><span class="hw">ｱﾗｰﾑﾘｾｯﾄ</span></div>
<div class="a sunk" style="left:119px;top:941px;width:733px;height:25px;background:#fff"></div>
<div class="a btn" style="left:833px;top:943px;width:17px;height:21px"></div>
<div class="a" style="left:838px;top:952px;width:0;height:0;border-left:4px solid transparent;border-right:4px solid transparent;border-top:4px solid #000"></div>
<!-- status bar -->
<div class="a thin-dn" style="left:15px;top:988px;width:150px;height:19px"></div>
<div class="a t" style="transform:scaleX(0.910);transform-origin:0 0;left:17px;top:991px;font-size:12px"><span class="fw">保存</span><span class="hw">ｳｪｲﾄ</span><span class="fw">！！</span></div>
<div class="a thin-dn" style="left:167px;top:988px;width:703px;height:19px"></div>
<div class="a" style="left:857px;top:995px;width:12px;height:12px;background:linear-gradient(135deg,transparent 0 45%,#fff 45% 52%,#808080 52% 60%,transparent 60% 68%,#fff 68% 75%,#808080 75% 83%,transparent 83%)"></div>

</body></html>
